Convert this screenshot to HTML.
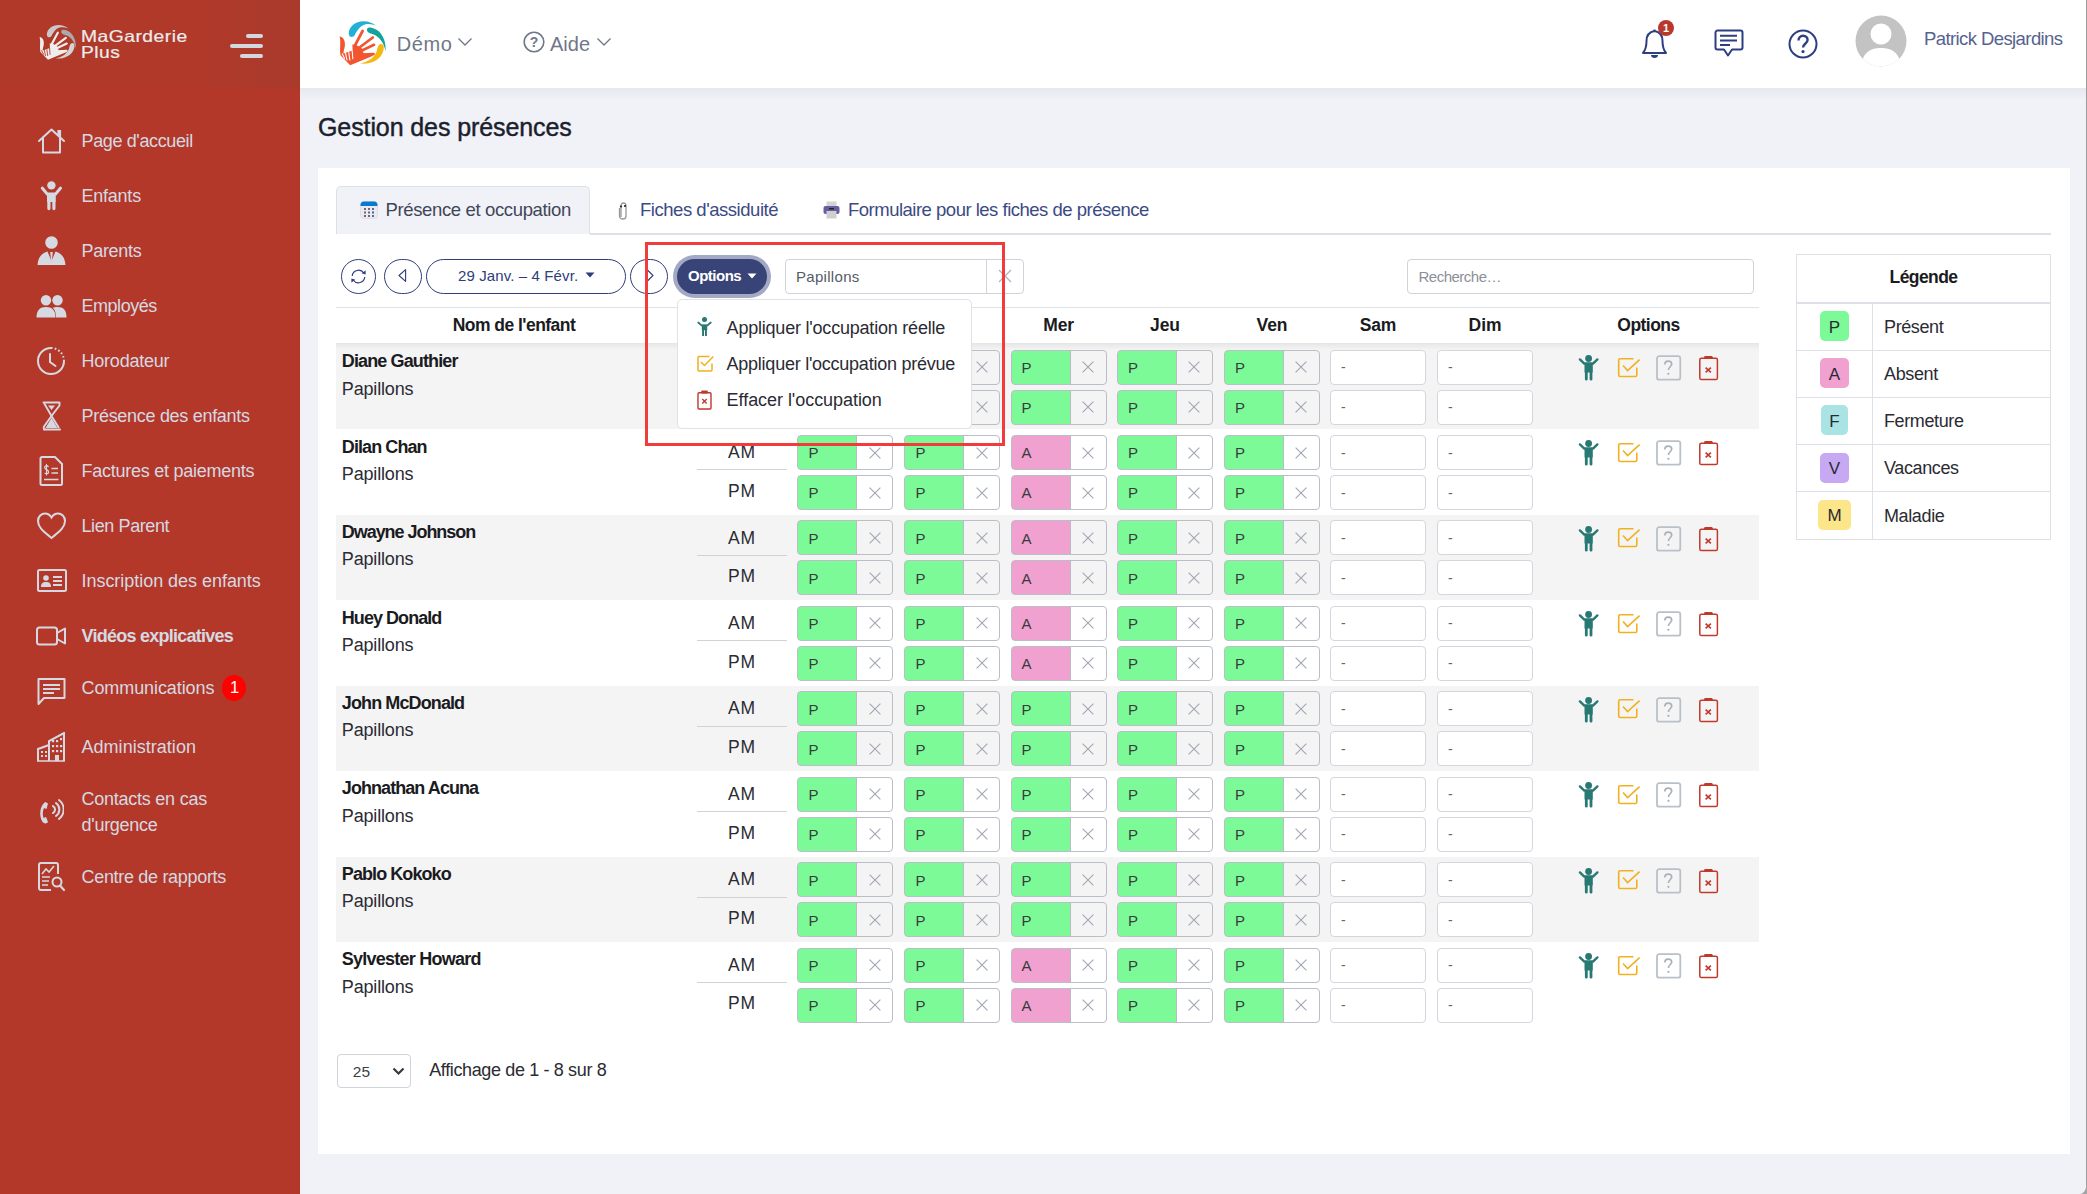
<!DOCTYPE html><html><head><meta charset="utf-8"><style>
html,body{margin:0;padding:0}
body{width:2087px;height:1194px;overflow:hidden;position:relative;background:#f1f2f7;font-family:"Liberation Sans",sans-serif}
.t{position:absolute;white-space:nowrap}
.r{position:absolute;box-sizing:border-box}
</style></head><body>
<div class="r" style="left:0px;top:0px;width:300px;height:1194px;background:#b3382a"></div>
<div class="r" style="left:0px;top:0px;width:300px;height:88px;background:linear-gradient(90deg,#b1392a 0,#b0392a 200px,#a93a2c 300px)"></div>
<svg class="r" style="left:35.6px;top:19.8px" width="43" height="43" viewBox="0 0 43 43"><g transform="scale(0.79)">
<path d="M41 10.8 C36 6 28 5 22 7.5 C16 10 13.5 15 13.8 19 C14 22 17.5 23 19.5 20.5 C22 16 24.5 11 30 9.5 C34 8.5 38 9.5 41 10.8 Z" fill="#c9c9c9"/>
<path d="M34 12.4 C43 12.5 51.5 21 50.6 36.4 C49 28 44.5 21.5 38 19.3 C34.5 18.3 31.8 17 32 14.8 C32.2 13.2 33 12.4 34 12.4 Z" fill="#a9abab"/>
<path d="M48.8 32 C49 42 38.5 50.5 24.9 48.3 C33.5 47 39.5 42.5 41.8 36 C42.5 33 43.2 29.3 45.7 29 C47.6 28.8 48.8 30.2 48.8 32 Z" fill="#d3d3d3"/>
<path d="M4.6 21.6 C8.5 22 10.2 26 9.9 30.5 C9.6 34 8.2 36.5 8.6 38.5 L17.6 35.5 L17.4 29.6 L20.5 29.5 L27 33.5 L28.5 38.2 L38.8 40.4 L15.2 50.2 L5.6 40.5 C4.2 34 6.2 28 4.6 21.6 Z" fill="#eeeeee"/>
<g stroke="#eeeeee" stroke-width="2.7" stroke-linecap="round"><path d="M20.2 30 L27.6 16"/><path d="M24.5 32.5 L37.8 22.5"/><path d="M27 35.5 L39 29.8"/><path d="M27.5 39.5 L38.5 39"/></g>
<g stroke="#b1392a" stroke-width="1.1" stroke-linecap="round"><path d="M7.2 38.8 L9.6 43.6"/><path d="M10.6 38.3 L12 45"/><path d="M13.8 37.6 L14.8 45"/><path d="M17.2 35.8 L17.8 43.6"/></g>
</g></svg>
<div class="t" style="left:81px;top:27.98px;font-size:16.5px;line-height:16.5px;color:#ececec;letter-spacing:0.4px;transform:scaleX(1.17);transform-origin:0 0;-webkit-text-stroke:0.2px #ececec;">MaGarderie</div>
<div class="t" style="left:81px;top:44.27px;font-size:16.5px;line-height:16.5px;color:#ececec;letter-spacing:0.4px;transform:scaleX(1.17);transform-origin:0 0;-webkit-text-stroke:0.2px #ececec;">Plus</div>
<div class="r" style="left:246px;top:34px;width:17px;height:3.6000000000000014px;background:#d3d8df;border-radius:2px"></div>
<div class="r" style="left:230px;top:44.2px;width:33px;height:3.5999999999999943px;background:#d3d8df;border-radius:2px"></div>
<div class="r" style="left:240px;top:54.3px;width:23px;height:3.6000000000000014px;background:#d3d8df;border-radius:2px"></div>
<div class="t" style="left:81.5px;top:131.50px;font-size:18px;line-height:18px;color:#d5d9e1;letter-spacing:-0.369px;">Page d'accueil</div>
<div class="t" style="left:81.5px;top:186.50px;font-size:18px;line-height:18px;color:#d5d9e1;letter-spacing:-0.233px;">Enfants</div>
<div class="t" style="left:81.5px;top:241.50px;font-size:18px;line-height:18px;color:#d5d9e1;letter-spacing:-0.317px;">Parents</div>
<div class="t" style="left:81.5px;top:296.50px;font-size:18px;line-height:18px;color:#d5d9e1;letter-spacing:-0.471px;">Employés</div>
<div class="t" style="left:81.5px;top:351.50px;font-size:18px;line-height:18px;color:#d5d9e1;letter-spacing:-0.222px;">Horodateur</div>
<div class="t" style="left:81.5px;top:406.50px;font-size:18px;line-height:18px;color:#d5d9e1;letter-spacing:-0.295px;">Présence des enfants</div>
<div class="t" style="left:81.5px;top:461.50px;font-size:18px;line-height:18px;color:#d5d9e1;letter-spacing:-0.26px;">Factures et paiements</div>
<div class="t" style="left:81.5px;top:516.50px;font-size:18px;line-height:18px;color:#d5d9e1;letter-spacing:-0.4px;">Lien Parent</div>
<div class="t" style="left:81.5px;top:571.50px;font-size:18px;line-height:18px;color:#d5d9e1;letter-spacing:-0.036px;">Inscription des enfants</div>
<div class="t" style="left:81.5px;top:626.50px;font-size:18px;line-height:18px;color:#d5d9e1;font-weight:700;letter-spacing:-0.75px;">Vidéos explicatives</div>
<div class="t" style="left:81.5px;top:679.20px;font-size:18px;line-height:18px;color:#d5d9e1;letter-spacing:-0.085px;">Communications</div>
<div class="t" style="left:81.5px;top:738.10px;font-size:18px;line-height:18px;color:#d5d9e1;letter-spacing:0.03px;">Administration</div>
<div class="t" style="left:81.5px;top:789.70px;font-size:18px;line-height:18px;color:#d5d9e1;letter-spacing:-0.243px;">Contacts en cas</div>
<div class="t" style="left:81.5px;top:815.50px;font-size:18px;line-height:18px;color:#d5d9e1;letter-spacing:-0.275px;">d'urgence</div>
<div class="t" style="left:81.5px;top:868.20px;font-size:18px;line-height:18px;color:#d5d9e1;letter-spacing:-0.312px;">Centre de rapports</div>
<div class="r" style="left:222.3px;top:675px;width:24.19999999999999px;height:26px;background:#ff0000;border-radius:50%"></div>
<div class="t" style="left:-65.4px;width:600px;text-align:center;top:679.18px;font-size:16.5px;line-height:16.5px;color:#fff;">1</div>
<svg class="r" style="left:37px;top:128px" width="29" height="26" viewBox="0 0 29 26"><path d="M2 13 L14.5 1.5 L27 13" fill="none" stroke="#d5d9e1" stroke-width="2" stroke-linecap="round" stroke-linejoin="round"/><path d="M6 10 V24.5 H23 V10" fill="none" stroke="#d5d9e1" stroke-width="2" stroke-linejoin="round"/><path d="M21 7 V2.5 H23.5 V9" fill="#d5d9e1" stroke="#d5d9e1" stroke-width="1.2"/></svg>
<svg class="r" style="left:40px;top:181px" width="23" height="30" viewBox="0 0 23 30"><circle cx="11.4" cy="4.4" r="4.2" fill="#d5d9e1"/><path d="M2.2 7 L7.2 13 H15.6 L20.6 7" fill="none" stroke="#d5d9e1" stroke-width="2.9" stroke-linecap="round" stroke-linejoin="round"/><path d="M7 12 H15.8 V21 H15.5 V27.6 A1.6 1.6 0 0 1 12.3 27.6 V21 H10.5 V27.6 A1.6 1.6 0 0 1 7.3 27.6 V21 H7 Z" fill="#d5d9e1"/></svg>
<svg class="r" style="left:37px;top:236px" width="29" height="29" viewBox="0 0 29 29"><circle cx="14.5" cy="6.5" r="6.3" fill="#d5d9e1"/><path d="M0.5 29 C1 21 5 17 10.5 15.5 L14.5 25 L18.5 15.5 C24 17 28 21 28.5 29 Z" fill="#d5d9e1"/><path d="M13.2 16 H15.8 L15 24 L14.5 25 L14 24 Z" fill="#d5d9e1"/></svg>
<svg class="r" style="left:36px;top:295px" width="31" height="23" viewBox="0 0 31 23"><circle cx="10" cy="5.2" r="5.2" fill="#d5d9e1"/><circle cx="21.5" cy="5.2" r="5.2" fill="#d5d9e1"/><path d="M0.5 22.5 C0.5 15 4 12 10 12 C16 12 19.5 15 19.5 22.5 Z" fill="#d5d9e1"/><path d="M20 22.5 C20 17 18.5 14 16.5 12.7 C18 12.2 19.5 12 21.5 12 C27.5 12 30.5 15 30.5 22.5 Z" fill="#d5d9e1"/></svg>
<svg class="r" style="left:36px;top:346px" width="31" height="30" viewBox="0 0 31 30"><path d="M15 2 A13 13 0 1 0 28 15" fill="none" stroke="#d5d9e1" stroke-width="2"/><path d="M15 2 A13 13 0 0 1 28 15" fill="none" stroke="#d5d9e1" stroke-width="2" stroke-dasharray="1.6 2.2"/><path d="M14 8 V16 L19.5 20" fill="none" stroke="#d5d9e1" stroke-width="2" stroke-linecap="round"/></svg>
<svg class="r" style="left:41px;top:401px" width="21" height="30" viewBox="0 0 21 30"><path d="M2.5 1.5 H18.5 M3 28.5 H19" stroke="#d5d9e1" stroke-width="2" stroke-linecap="round"/><path d="M18.5 2 V4.5 L10.5 15 L18 27" fill="none" stroke="#d5d9e1" stroke-width="1.9" stroke-linejoin="round"/><path d="M3 2 L10.5 15 L3 25.5 C2.3 27 2.8 28 4 28.5" fill="none" stroke="#d5d9e1" stroke-width="1.9" stroke-linejoin="round"/><path d="M7 4.5 H14 L10.5 9 Z" fill="#d5d9e1"/><path d="M10.5 17 L16.5 27 H4.5 Z" fill="#d5d9e1"/></svg>
<svg class="r" style="left:39px;top:456px" width="25" height="30" viewBox="0 0 25 30"><path d="M3 1 H16 L23 8 V27.5 A1.5 1.5 0 0 1 21.5 29 H3 A1.5 1.5 0 0 1 1.5 27.5 V2.5 A1.5 1.5 0 0 1 3 1 Z" fill="none" stroke="#d5d9e1" stroke-width="2"/><path d="M12.5 12.5 H19 M12.5 17 H19 M5 23.5 H19.5" stroke="#d5d9e1" stroke-width="1.6"/><path d="M9.5 11 C9 10 8 9.6 7 9.8 C5.5 10.1 5.2 12 6.5 13 C7.5 13.8 9.5 14.2 9.6 16 C9.7 17.5 7.5 18.2 5.6 17" fill="none" stroke="#d5d9e1" stroke-width="1.3"/><path d="M7.5 8 V19.5" stroke="#d5d9e1" stroke-width="1.1"/></svg>
<svg class="r" style="left:36px;top:512px" width="31" height="28" viewBox="0 0 31 28"><path d="M15.5 26 C9 20.5 2 16 2 9 C2 4.5 5.5 1.5 9 1.5 C12 1.5 14 3 15.5 5.5 C17 3 19 1.5 22 1.5 C25.5 1.5 29 4.5 29 9 C29 16 22 20.5 15.5 26 Z" fill="none" stroke="#d5d9e1" stroke-width="2"/></svg>
<svg class="r" style="left:37px;top:569px" width="30" height="23" viewBox="0 0 30 23"><rect x="1" y="1" width="28" height="21" rx="1.5" fill="none" stroke="#d5d9e1" stroke-width="2"/><circle cx="9" cy="9" r="2.8" fill="#d5d9e1"/><path d="M4 18 C4 14 6 13 9 13 C12 13 14 14 14 18 Z" fill="#d5d9e1"/><path d="M16 8 H25 M16 12 H25 M16 16 H25" stroke="#d5d9e1" stroke-width="1.8"/></svg>
<svg class="r" style="left:36px;top:626px" width="31" height="20" viewBox="0 0 31 20"><rect x="1" y="1.5" width="20" height="17" rx="2.5" fill="none" stroke="#d5d9e1" stroke-width="2"/><path d="M21 7 L29 2.5 V17.5 L21 13" fill="none" stroke="#d5d9e1" stroke-width="2" stroke-linejoin="round"/></svg>
<svg class="r" style="left:36px;top:677px" width="31" height="30" viewBox="0 0 31 30"><path d="M2.5 2 H28.5 V21 H8 L2.5 27 Z" fill="none" stroke="#d5d9e1" stroke-width="2" stroke-linejoin="round"/><path d="M7 8 H24 M7 12 H24 M7 16 H18" stroke="#d5d9e1" stroke-width="1.8"/></svg>
<svg class="r" style="left:36px;top:732px" width="30" height="30" viewBox="0 0 30 30"><path d="M1 29 H29" stroke="#d5d9e1" stroke-width="1.5"/><path d="M13 29 V9 L28 1 V29" fill="none" stroke="#d5d9e1" stroke-width="2"/><path d="M2 29 V17 L13 13" fill="none" stroke="#d5d9e1" stroke-width="2"/><g fill="#d5d9e1"><rect x="16" y="8" width="2.2" height="2.2"/><rect x="20" y="8" width="2.2" height="2.2"/><rect x="24" y="6" width="2.2" height="2.2"/><rect x="16" y="13" width="2.2" height="2.2"/><rect x="20" y="13" width="2.2" height="2.2"/><rect x="24" y="13" width="2.2" height="2.2"/><rect x="16" y="18" width="2.2" height="2.2"/><rect x="20" y="18" width="2.2" height="2.2"/><rect x="24" y="18" width="2.2" height="2.2"/><rect x="5" y="19" width="2" height="2"/><rect x="9" y="19" width="2" height="2"/><rect x="5" y="23" width="2" height="2"/><rect x="9" y="23" width="2" height="2"/><rect x="19" y="23" width="4" height="6"/></g></svg>
<svg class="r" style="left:38px;top:797px" width="26" height="30" viewBox="0 0 26 30"><path d="M6 6 C2 10 1 18 4 24 C5 26 7 27 9 26 L10 25 L8 20 L5.5 21 C4.5 18 4.5 14 6 11 L8.5 12 L10 6.5 L7.5 5 Z" fill="#d5d9e1"/><path d="M13 10 A4 4 0 0 1 13 17 M16 7 A8 8 0 0 1 16 20 M19 4 A12 12 0 0 1 19 23" fill="none" stroke="#d5d9e1" stroke-width="2" stroke-linecap="round" transform="translate(2,-1)"/></svg>
<svg class="r" style="left:38px;top:862px" width="27" height="30" viewBox="0 0 27 30"><path d="M20 12 V3 A2 2 0 0 0 18 1 H3 A2 2 0 0 0 1 3 V26 A2 2 0 0 0 3 28 H13" fill="none" stroke="#d5d9e1" stroke-width="2"/><path d="M4 12 L8 7 L11 10 L16 4" fill="none" stroke="#d5d9e1" stroke-width="1.6"/><path d="M4 15 H12 M4 19 H11 M4 23 H10" stroke="#d5d9e1" stroke-width="1.6"/><circle cx="19" cy="20" r="4.5" fill="none" stroke="#d5d9e1" stroke-width="2"/><path d="M22 23.5 L26 28" stroke="#d5d9e1" stroke-width="2.2" stroke-linecap="round"/></svg>
<div class="r" style="left:300px;top:0px;width:1787px;height:88px;background:#fff"></div>
<div class="r" style="left:300px;top:88px;width:1787px;height:12px;background:linear-gradient(#e6e8ee,#f1f2f7)"></div>
<svg class="r" style="left:335px;top:15px" width="54" height="54" viewBox="0 0 54 54"><g transform="scale(1.0)">
<path d="M41 10.8 C36 6 28 5 22 7.5 C16 10 13.5 15 13.8 19 C14 22 17.5 23 19.5 20.5 C22 16 24.5 11 30 9.5 C34 8.5 38 9.5 41 10.8 Z" fill="#22b1d6"/>
<path d="M34 12.4 C43 12.5 51.5 21 50.6 36.4 C49 28 44.5 21.5 38 19.3 C34.5 18.3 31.8 17 32 14.8 C32.2 13.2 33 12.4 34 12.4 Z" fill="#12a39c"/>
<path d="M48.8 32 C49 42 38.5 50.5 24.9 48.3 C33.5 47 39.5 42.5 41.8 36 C42.5 33 43.2 29.3 45.7 29 C47.6 28.8 48.8 30.2 48.8 32 Z" fill="#f4b813"/>
<path d="M4.6 21.6 C8.5 22 10.2 26 9.9 30.5 C9.6 34 8.2 36.5 8.6 38.5 L17.6 35.5 L17.4 29.6 L20.5 29.5 L27 33.5 L28.5 38.2 L38.8 40.4 L15.2 50.2 L5.6 40.5 C4.2 34 6.2 28 4.6 21.6 Z" fill="#f35530"/>
<g stroke="#f35530" stroke-width="2.7" stroke-linecap="round"><path d="M20.2 30 L27.6 16"/><path d="M24.5 32.5 L37.8 22.5"/><path d="M27 35.5 L39 29.8"/><path d="M27.5 39.5 L38.5 39"/></g>
<g stroke="#ffffff" stroke-width="1.1" stroke-linecap="round"><path d="M7.2 38.8 L9.6 43.6"/><path d="M10.6 38.3 L12 45"/><path d="M13.8 37.6 L14.8 45"/><path d="M17.2 35.8 L17.8 43.6"/></g>
</g></svg>
<div class="t" style="left:396.8px;top:33.80px;font-size:20px;line-height:20px;color:#707788;letter-spacing:0.6px;">Démo</div>
<svg class="r" style="left:457px;top:37px" width="16" height="10" viewBox="0 0 16 10"><path d="M1.5 1.5 L8 8 L14.5 1.5" fill="none" stroke="#707788" stroke-width="1.3"/></svg>
<svg class="r" style="left:523px;top:31px" width="22" height="22" viewBox="0 0 22 22"><circle cx="11" cy="11" r="9.8" fill="none" stroke="#707788" stroke-width="1.6"/><text x="11" y="16" text-anchor="middle" font-size="14" font-weight="700" font-family="Liberation Sans" fill="#707788">?</text></svg>
<div class="t" style="left:550px;top:33.80px;font-size:20px;line-height:20px;color:#707788;">Aide</div>
<svg class="r" style="left:596px;top:37px" width="16" height="10" viewBox="0 0 16 10"><path d="M1.5 1.5 L8 8 L14.5 1.5" fill="none" stroke="#707788" stroke-width="1.3"/></svg>
<svg class="r" style="left:1641px;top:29px" width="27" height="30" viewBox="0 0 27 30"><path d="M13.5 2 C8 3 5.5 7 5.5 12 C5.5 17 4.5 21 2 24 H25 C22.5 21 21.5 17 21.5 12 C21.5 7 19 3 13.5 2 Z" fill="none" stroke="#2d3f80" stroke-width="2" stroke-linejoin="round"/><path d="M13.5 0.5 V2.5" stroke="#2d3f80" stroke-width="2"/><path d="M10 26 H17 C17 28 15.5 29 13.5 29 C11.5 29 10 28 10 26 Z" fill="#2d3f80"/></svg>
<div class="r" style="left:1658px;top:19.5px;width:16px;height:16.0px;background:#b8392b;border-radius:50%"></div>
<div class="t" style="left:1366px;width:600px;text-align:center;top:22.65px;font-size:11px;line-height:11px;color:#fff;font-weight:700;">1</div>
<svg class="r" style="left:1714px;top:29px" width="30" height="29" viewBox="0 0 30 29"><path d="M3.5 1.5 H26.5 A2 2 0 0 1 28.5 3.5 V18.5 A2 2 0 0 1 26.5 20.5 H18 L14 26.5 L10 20.5 H3.5 A2 2 0 0 1 1.5 18.5 V3.5 A2 2 0 0 1 3.5 1.5 Z" fill="none" stroke="#2d3f80" stroke-width="2" stroke-linejoin="round"/><path d="M6 6.8 H23 M6 11.5 H23 M6 16 H16" stroke="#2d3f80" stroke-width="2"/></svg>
<svg class="r" style="left:1788px;top:29px" width="30" height="30" viewBox="0 0 30 30"><circle cx="15" cy="15" r="13.5" fill="none" stroke="#2d3f80" stroke-width="2"/><path d="M10.5 11.5 C10.5 8.5 12.5 6.8 15 6.8 C17.8 6.8 19.6 8.6 19.6 11 C19.6 14.5 15 15 15 18.5" fill="none" stroke="#2d3f80" stroke-width="2.4"/><circle cx="15" cy="22.6" r="1.6" fill="#2d3f80"/></svg>
<svg class="r" style="left:1855px;top:15px" width="52" height="52" viewBox="0 0 52 52"><defs><clipPath id="cav"><circle cx="26" cy="26" r="25.5"/></clipPath></defs><circle cx="26" cy="26" r="25.5" fill="#c3c3c3"/><g clip-path="url(#cav)"><circle cx="26" cy="19" r="10.5" fill="#fff"/><path d="M6 52 C7 38 15 33 26 33 C37 33 45 38 46 52 Z" fill="#fff"/></g></svg>
<div class="t" style="left:1924px;top:30.27px;font-size:18.5px;line-height:18.5px;color:#55638f;letter-spacing:-0.59px;">Patrick Desjardins</div>
<div class="t" style="left:318px;top:114.75px;font-size:25px;line-height:25px;color:#1c1f2e;letter-spacing:-0.1px;-webkit-text-stroke:0.45px #1c1f2e;">Gestion des présences</div>
<div class="r" style="left:318px;top:168px;width:1752px;height:986px;background:#fff"></div>
<div class="r" style="left:2085.6px;top:0px;width:1.400000000000091px;height:1194px;background:#9c9c9c"></div>
<svg class="r" style="left:2070px;top:1174px" width="17" height="20" viewBox="0 0 17 20"><path d="M16.3 11 A7 9 0 0 1 10.5 20 H17 V11 Z" fill="#a4a4a4"/></svg>
<div class="r" style="left:336px;top:186px;width:254px;height:48px;background:#f1f2f7;border:1px solid #dde1e7;border-bottom:none;border-radius:5px 5px 0 0"></div>
<div class="r" style="left:590px;top:233px;width:1461px;height:1.5px;background:#dde1e7"></div>
<svg class="r" style="left:360px;top:201px" width="18" height="18" viewBox="0 0 18 18"><rect x="0.5" y="0.5" width="17" height="17" rx="3.5" fill="#ece9f1" stroke="#d8d4de" stroke-width="0.6"/><path d="M0.5 4 A3.5 3.5 0 0 1 4 0.5 H14 A3.5 3.5 0 0 1 17.5 4 V5 H0.5 Z" fill="#0a7ad0"/><g fill="#6e6877"><rect x="4" y="7" width="2" height="2"/><rect x="8" y="7" width="2" height="2"/><rect x="12" y="7" width="2" height="2"/><rect x="4" y="10.5" width="2" height="2"/><rect x="8" y="10.5" width="2" height="2"/><rect x="4" y="14" width="2" height="2"/><rect x="8" y="14" width="2" height="2"/><rect x="12" y="14" width="2" height="2"/></g><rect x="12" y="10.5" width="2" height="2" fill="#0a7ad0"/></svg>
<div class="t" style="left:385.5px;top:200.78px;font-size:18.5px;line-height:18.5px;color:#404659;letter-spacing:-0.36px;">Présence et occupation</div>
<svg class="r" style="left:617px;top:201px" width="12" height="19" viewBox="0 0 12 19"><path d="M4 16 V5 C4 3 5 2 6.5 2 C8 2 9 3 9 5 V15 C9 17 8 18 6 18 C4 18 2.5 17 2.5 15 V7" fill="none" stroke="#999" stroke-width="1.3"/><circle cx="4" cy="5.5" r="1.1" fill="#222"/><circle cx="8" cy="5" r="1.1" fill="#222"/></svg>
<div class="t" style="left:640px;top:200.78px;font-size:18.5px;line-height:18.5px;color:#3b4a85;letter-spacing:-0.47px;">Fiches d&#39;assiduité</div>
<svg class="r" style="left:823px;top:201px" width="17" height="18" viewBox="0 0 17 18"><rect x="3.5" y="0.5" width="10" height="5" fill="#d4d4d4"/><rect x="0.5" y="5" width="16" height="8" rx="2" fill="#6a5c9e"/><rect x="3.5" y="10" width="10" height="7.5" fill="#cfcfcf"/><rect x="6" y="7" width="5" height="1.4" fill="#222"/></svg>
<div class="t" style="left:848px;top:200.78px;font-size:18.5px;line-height:18.5px;color:#3b4a85;letter-spacing:-0.5px;">Formulaire pour les fiches de présence</div>
<div class="r" style="left:341px;top:259px;width:35px;height:35px;border:1.3px solid #2f3d78;border-radius:50%"></div>
<svg class="r" style="left:349px;top:267px" width="19" height="19" viewBox="0 0 19 19"><path d="M3.2 9 A6.4 6.4 0 0 1 14.8 6" fill="none" stroke="#2f3d78" stroke-width="1.2"/><path d="M15.8 10 A6.4 6.4 0 0 1 4.2 13" fill="none" stroke="#2f3d78" stroke-width="1.2"/><path d="M12.6 6.2 L16.6 7.6 L16.6 3.4 Z" fill="#2f3d78"/><path d="M6.4 12.8 L2.4 11.4 L2.4 15.6 Z" fill="#2f3d78"/></svg>
<div class="r" style="left:384px;top:259px;width:38px;height:35px;border:1.3px solid #2f3d78;border-radius:18px"></div>
<svg class="r" style="left:397px;top:268px" width="10" height="16" viewBox="0 0 10 16"><path d="M8.6 1.6 L2 7.5 L8.6 13.4 Z" fill="none" stroke="#2f3d78" stroke-width="1.1" stroke-linejoin="round"/></svg>
<div class="r" style="left:426px;top:259px;width:200px;height:35px;border:1.3px solid #2f3d78;border-radius:18px"></div>
<div class="t" style="left:458px;top:268.45px;font-size:15px;line-height:15px;color:#2f3d78;letter-spacing:0.12px;">29 Janv. – 4 Févr.</div>
<svg class="r" style="left:585px;top:272px" width="10" height="6" viewBox="0 0 10 6"><path d="M0.5 0.5 H9.5 L5 5.5 Z" fill="#2f3d78"/></svg>
<div class="r" style="left:630px;top:259px;width:38px;height:35px;border:1.3px solid #2f3d78;border-radius:18px"></div>
<svg class="r" style="left:644px;top:268px" width="10" height="16" viewBox="0 0 10 16"><path d="M3.5 2 L9 7.5 L3.5 13" fill="none" stroke="#2f3d78" stroke-width="1.1"/></svg>
<div class="r" style="left:673px;top:255px;width:98px;height:43px;background:#a2a9c4;border-radius:22px"></div>
<div class="r" style="left:677px;top:259px;width:90px;height:35px;background:#384478;border-radius:18px"></div>
<div class="t" style="left:688px;top:267.85px;font-size:15px;line-height:15px;color:#fff;font-weight:700;letter-spacing:-0.5px;">Options</div>
<svg class="r" style="left:747px;top:272.5px" width="10" height="6" viewBox="0 0 10 6"><path d="M0.5 0.5 H9.5 L5 5.5 Z" fill="#fff"/></svg>
<div class="r" style="left:785px;top:259px;width:239px;height:35px;border:1px solid #cfd4db;border-radius:4px;background:#fff"></div>
<div class="r" style="left:986px;top:259px;width:1px;height:35px;background:#cfd4db"></div>
<div class="t" style="left:796px;top:268.95px;font-size:15px;line-height:15px;color:#555b66;letter-spacing:0.3px;">Papillons</div>
<svg class="r" style="left:997px;top:268px" width="16" height="16" viewBox="0 0 16 16"><path d="M2 2 L14 14 M14 2 L2 14" stroke="#b0b4bb" stroke-width="1.3"/></svg>
<div class="r" style="left:1407px;top:259px;width:347px;height:35px;border:1px solid #cfd4db;border-radius:4px;background:#fff"></div>
<div class="t" style="left:1418.5px;top:269.25px;font-size:15px;line-height:15px;color:#8b9099;letter-spacing:-0.5px;">Recherche…</div>
<div class="r" style="left:336px;top:307px;width:1423px;height:1.1999999999999886px;background:#dfe3e9"></div>
<div class="t" style="left:214px;width:600px;text-align:center;top:316.93px;font-size:17.5px;line-height:17.5px;color:#1b1b22;font-weight:700;letter-spacing:-0.54px;">Nom de l&#39;enfant</div>
<div class="t" style="left:545.4px;width:600px;text-align:center;top:316.93px;font-size:17.5px;line-height:17.5px;color:#1b1b22;font-weight:700;letter-spacing:-0.1px;">Lun</div>
<div class="t" style="left:652.4px;width:600px;text-align:center;top:316.93px;font-size:17.5px;line-height:17.5px;color:#1b1b22;font-weight:700;letter-spacing:-0.1px;">Mar</div>
<div class="t" style="left:758.5999999999999px;width:600px;text-align:center;top:316.93px;font-size:17.5px;line-height:17.5px;color:#1b1b22;font-weight:700;letter-spacing:-0.1px;">Mer</div>
<div class="t" style="left:865px;width:600px;text-align:center;top:316.93px;font-size:17.5px;line-height:17.5px;color:#1b1b22;font-weight:700;letter-spacing:-0.1px;">Jeu</div>
<div class="t" style="left:972px;width:600px;text-align:center;top:316.93px;font-size:17.5px;line-height:17.5px;color:#1b1b22;font-weight:700;letter-spacing:-0.1px;">Ven</div>
<div class="t" style="left:1078px;width:600px;text-align:center;top:316.93px;font-size:17.5px;line-height:17.5px;color:#1b1b22;font-weight:700;letter-spacing:-0.1px;">Sam</div>
<div class="t" style="left:1185px;width:600px;text-align:center;top:316.93px;font-size:17.5px;line-height:17.5px;color:#1b1b22;font-weight:700;letter-spacing:-0.1px;">Dim</div>
<div class="t" style="left:1348.5px;width:600px;text-align:center;top:316.93px;font-size:17.5px;line-height:17.5px;color:#1b1b22;font-weight:700;letter-spacing:-0.55px;">Options</div>
<div class="r" style="left:336px;top:342.5px;width:1423px;height:1.5px;background:#e6e6e6"></div>
<div class="r" style="left:336px;top:344px;width:1423px;height:6px;background:linear-gradient(rgba(0,0,0,0.06),rgba(0,0,0,0))"></div>
<div class="r" style="left:336px;top:344.0px;width:1423px;height:85.43px;background:#f4f4f4"></div>
<div class="r" style="left:336px;top:344.0px;width:1423px;height:6.0px;background:linear-gradient(rgba(0,0,0,0.05),rgba(0,0,0,0))"></div>
<div class="t" style="left:341.8px;top:352.30px;font-size:18px;line-height:18px;color:#1b1b22;font-weight:700;letter-spacing:-0.87px;">Diane Gauthier</div>
<div class="t" style="left:341.8px;top:379.50px;font-size:18px;line-height:18px;color:#2b2b33;letter-spacing:-0.16px;">Papillons</div>
<div class="t" style="left:442px;width:600px;text-align:center;top:358.73px;font-size:17.5px;line-height:17.5px;color:#2b2b33;letter-spacing:0.8px;">AM</div>
<div class="t" style="left:442px;width:600px;text-align:center;top:397.43px;font-size:17.5px;line-height:17.5px;color:#2b2b33;letter-spacing:0.8px;">PM</div>
<div class="r" style="left:697px;top:384.0px;width:90px;height:1.0px;background:#d2d2d2"></div>
<div class="r" style="left:797.4px;top:349.5px;width:96.0px;height:35.0px;border:1px solid #b9bec7;border-radius:4px;background:linear-gradient(90deg,#7cfa98 58.5px,transparent 58.5px)"></div>
<div class="r" style="left:856.4px;top:349.5px;width:1.0px;height:35.0px;background:#b9bcc4"></div>
<div class="t" style="left:808.4px;top:359.95px;font-size:15px;line-height:15px;color:#3a3a40;">P</div>
<svg class="r" style="left:868.6px;top:361.1px" width="12" height="12" viewBox="0 0 12 12"><path d="M0.6 0.6 L11.4 11.4 M11.4 0.6 L0.6 11.4" stroke="#9fa6b1" stroke-width="1.1"/></svg>
<div class="r" style="left:797.4px;top:389.6px;width:96.0px;height:35.0px;border:1px solid #b9bec7;border-radius:4px;background:linear-gradient(90deg,#7cfa98 58.5px,transparent 58.5px)"></div>
<div class="r" style="left:856.4px;top:389.6px;width:1.0px;height:35.0px;background:#b9bcc4"></div>
<div class="t" style="left:808.4px;top:400.05px;font-size:15px;line-height:15px;color:#3a3a40;">P</div>
<svg class="r" style="left:868.6px;top:401.20000000000005px" width="12" height="12" viewBox="0 0 12 12"><path d="M0.6 0.6 L11.4 11.4 M11.4 0.6 L0.6 11.4" stroke="#9fa6b1" stroke-width="1.1"/></svg>
<div class="r" style="left:904.4px;top:349.5px;width:96.0px;height:35.0px;border:1px solid #b9bec7;border-radius:4px;background:linear-gradient(90deg,#7cfa98 58.5px,transparent 58.5px)"></div>
<div class="r" style="left:963.4px;top:349.5px;width:1.0px;height:35.0px;background:#b9bcc4"></div>
<div class="t" style="left:915.4px;top:359.95px;font-size:15px;line-height:15px;color:#3a3a40;">P</div>
<svg class="r" style="left:975.6px;top:361.1px" width="12" height="12" viewBox="0 0 12 12"><path d="M0.6 0.6 L11.4 11.4 M11.4 0.6 L0.6 11.4" stroke="#9fa6b1" stroke-width="1.1"/></svg>
<div class="r" style="left:904.4px;top:389.6px;width:96.0px;height:35.0px;border:1px solid #b9bec7;border-radius:4px;background:linear-gradient(90deg,#7cfa98 58.5px,transparent 58.5px)"></div>
<div class="r" style="left:963.4px;top:389.6px;width:1.0px;height:35.0px;background:#b9bcc4"></div>
<div class="t" style="left:915.4px;top:400.05px;font-size:15px;line-height:15px;color:#3a3a40;">P</div>
<svg class="r" style="left:975.6px;top:401.20000000000005px" width="12" height="12" viewBox="0 0 12 12"><path d="M0.6 0.6 L11.4 11.4 M11.4 0.6 L0.6 11.4" stroke="#9fa6b1" stroke-width="1.1"/></svg>
<div class="r" style="left:1010.6px;top:349.5px;width:95.99999999999989px;height:35.0px;border:1px solid #b9bec7;border-radius:4px;background:linear-gradient(90deg,#7cfa98 58.5px,transparent 58.5px)"></div>
<div class="r" style="left:1069.6px;top:349.5px;width:1.0px;height:35.0px;background:#b9bcc4"></div>
<div class="t" style="left:1021.6px;top:359.95px;font-size:15px;line-height:15px;color:#3a3a40;">P</div>
<svg class="r" style="left:1081.8px;top:361.1px" width="12" height="12" viewBox="0 0 12 12"><path d="M0.6 0.6 L11.4 11.4 M11.4 0.6 L0.6 11.4" stroke="#9fa6b1" stroke-width="1.1"/></svg>
<div class="r" style="left:1010.6px;top:389.6px;width:95.99999999999989px;height:35.0px;border:1px solid #b9bec7;border-radius:4px;background:linear-gradient(90deg,#7cfa98 58.5px,transparent 58.5px)"></div>
<div class="r" style="left:1069.6px;top:389.6px;width:1.0px;height:35.0px;background:#b9bcc4"></div>
<div class="t" style="left:1021.6px;top:400.05px;font-size:15px;line-height:15px;color:#3a3a40;">P</div>
<svg class="r" style="left:1081.8px;top:401.20000000000005px" width="12" height="12" viewBox="0 0 12 12"><path d="M0.6 0.6 L11.4 11.4 M11.4 0.6 L0.6 11.4" stroke="#9fa6b1" stroke-width="1.1"/></svg>
<div class="r" style="left:1117px;top:349.5px;width:96px;height:35.0px;border:1px solid #b9bec7;border-radius:4px;background:linear-gradient(90deg,#7cfa98 58.5px,transparent 58.5px)"></div>
<div class="r" style="left:1176px;top:349.5px;width:1px;height:35.0px;background:#b9bcc4"></div>
<div class="t" style="left:1128px;top:359.95px;font-size:15px;line-height:15px;color:#3a3a40;">P</div>
<svg class="r" style="left:1188.2px;top:361.1px" width="12" height="12" viewBox="0 0 12 12"><path d="M0.6 0.6 L11.4 11.4 M11.4 0.6 L0.6 11.4" stroke="#9fa6b1" stroke-width="1.1"/></svg>
<div class="r" style="left:1117px;top:389.6px;width:96px;height:35.0px;border:1px solid #b9bec7;border-radius:4px;background:linear-gradient(90deg,#7cfa98 58.5px,transparent 58.5px)"></div>
<div class="r" style="left:1176px;top:389.6px;width:1px;height:35.0px;background:#b9bcc4"></div>
<div class="t" style="left:1128px;top:400.05px;font-size:15px;line-height:15px;color:#3a3a40;">P</div>
<svg class="r" style="left:1188.2px;top:401.20000000000005px" width="12" height="12" viewBox="0 0 12 12"><path d="M0.6 0.6 L11.4 11.4 M11.4 0.6 L0.6 11.4" stroke="#9fa6b1" stroke-width="1.1"/></svg>
<div class="r" style="left:1224px;top:349.5px;width:96px;height:35.0px;border:1px solid #b9bec7;border-radius:4px;background:linear-gradient(90deg,#7cfa98 58.5px,transparent 58.5px)"></div>
<div class="r" style="left:1283px;top:349.5px;width:1px;height:35.0px;background:#b9bcc4"></div>
<div class="t" style="left:1235px;top:359.95px;font-size:15px;line-height:15px;color:#3a3a40;">P</div>
<svg class="r" style="left:1295.2px;top:361.1px" width="12" height="12" viewBox="0 0 12 12"><path d="M0.6 0.6 L11.4 11.4 M11.4 0.6 L0.6 11.4" stroke="#9fa6b1" stroke-width="1.1"/></svg>
<div class="r" style="left:1224px;top:389.6px;width:96px;height:35.0px;border:1px solid #b9bec7;border-radius:4px;background:linear-gradient(90deg,#7cfa98 58.5px,transparent 58.5px)"></div>
<div class="r" style="left:1283px;top:389.6px;width:1px;height:35.0px;background:#b9bcc4"></div>
<div class="t" style="left:1235px;top:400.05px;font-size:15px;line-height:15px;color:#3a3a40;">P</div>
<svg class="r" style="left:1295.2px;top:401.20000000000005px" width="12" height="12" viewBox="0 0 12 12"><path d="M0.6 0.6 L11.4 11.4 M11.4 0.6 L0.6 11.4" stroke="#9fa6b1" stroke-width="1.1"/></svg>
<div class="r" style="left:1330px;top:349.5px;width:96px;height:35.0px;background:#fff;border:1px solid #d3d6dc;border-radius:4px"></div>
<div class="t" style="left:1341px;top:360.10px;font-size:14px;line-height:14px;color:#666;">-</div>
<div class="r" style="left:1330px;top:389.6px;width:96px;height:35.0px;background:#fff;border:1px solid #d3d6dc;border-radius:4px"></div>
<div class="t" style="left:1341px;top:400.20px;font-size:14px;line-height:14px;color:#666;">-</div>
<div class="r" style="left:1437px;top:349.5px;width:96px;height:35.0px;background:#fff;border:1px solid #d3d6dc;border-radius:4px"></div>
<div class="t" style="left:1448px;top:360.10px;font-size:14px;line-height:14px;color:#666;">-</div>
<div class="r" style="left:1437px;top:389.6px;width:96px;height:35.0px;background:#fff;border:1px solid #d3d6dc;border-radius:4px"></div>
<div class="t" style="left:1448px;top:400.20px;font-size:14px;line-height:14px;color:#666;">-</div>
<svg class="r" style="left:1578px;top:355.0px" width="22" height="27" viewBox="0 0 22 27"><circle cx="10.6" cy="3.5" r="3.4" fill="#287873"/><path d="M1.9 4.4 L6.3 8.6 H15 L19.4 4.4" fill="none" stroke="#287873" stroke-width="2.4" stroke-linecap="round" stroke-linejoin="round"/><path d="M6.5 7.6 H14.8 V17.5 H14.4 V24.2 A1.4 1.4 0 0 1 11.6 24.2 V17.5 H9.7 V24.2 A1.4 1.4 0 0 1 6.9 24.2 V17.5 H6.5 Z" fill="#287873"/></svg>
<svg class="r" style="left:1617px;top:356.5px" width="24" height="22" viewBox="0 0 24 22"><path d="M16.5 1.7 H3.2 A1.5 1.5 0 0 0 1.7 3.2 V18 A1.5 1.5 0 0 0 3.2 19.5 H18.3 A1.5 1.5 0 0 0 19.8 18 V10.5" fill="none" stroke="#f2b01e" stroke-width="1.6"/><path d="M6 8.5 L10.6 13.6 L22.6 2.6" fill="none" stroke="#f2b01e" stroke-width="1.6"/></svg>
<svg class="r" style="left:1655px;top:355.0px" width="27" height="26" viewBox="0 0 27 26"><rect x="2" y="1.1" width="23.3" height="23.6" rx="2.3" fill="none" stroke="#b9c0c9" stroke-width="1.8"/><path d="M9.8 9.6 C9.8 7.4 11.4 6.1 13.3 6.1 C15.3 6.1 16.7 7.4 16.7 9.1 C16.7 11.6 13.4 12 13.4 15" fill="none" stroke="#aab1bb" stroke-width="1.7"/><circle cx="13.4" cy="18.8" r="1.1" fill="#aab1bb"/></svg>
<svg class="r" style="left:1698px;top:355.0px" width="21" height="26" viewBox="0 0 21 26"><rect x="1.8" y="3.2" width="17.6" height="21.4" rx="1.6" fill="none" stroke="#c0392b" stroke-width="1.5"/><path d="M5.5 4 L6.6 0.9 H14.2 L15.3 4 Z" fill="#c0392b"/><path d="M7.6 12.6 L12.9 17.4 M12.9 12.6 L7.6 17.4" stroke="#c0392b" stroke-width="1.6"/></svg>
<div class="t" style="left:341.8px;top:437.73px;font-size:18px;line-height:18px;color:#1b1b22;font-weight:700;letter-spacing:-0.91px;">Dilan Chan</div>
<div class="t" style="left:341.8px;top:464.93px;font-size:18px;line-height:18px;color:#2b2b33;letter-spacing:-0.16px;">Papillons</div>
<div class="t" style="left:442px;width:600px;text-align:center;top:444.16px;font-size:17.5px;line-height:17.5px;color:#2b2b33;letter-spacing:0.8px;">AM</div>
<div class="t" style="left:442px;width:600px;text-align:center;top:482.86px;font-size:17.5px;line-height:17.5px;color:#2b2b33;letter-spacing:0.8px;">PM</div>
<div class="r" style="left:697px;top:469.43px;width:90px;height:1.0px;background:#d2d2d2"></div>
<div class="r" style="left:797.4px;top:434.93px;width:96.0px;height:35.0px;border:1px solid #b9bec7;border-radius:4px;background:linear-gradient(90deg,#7cfa98 58.5px,transparent 58.5px)"></div>
<div class="r" style="left:856.4px;top:434.93px;width:1.0px;height:35.0px;background:#b9bcc4"></div>
<div class="t" style="left:808.4px;top:445.38px;font-size:15px;line-height:15px;color:#3a3a40;">P</div>
<svg class="r" style="left:868.6px;top:446.53000000000003px" width="12" height="12" viewBox="0 0 12 12"><path d="M0.6 0.6 L11.4 11.4 M11.4 0.6 L0.6 11.4" stroke="#9fa6b1" stroke-width="1.1"/></svg>
<div class="r" style="left:797.4px;top:475.03000000000003px;width:96.0px;height:35.0px;border:1px solid #b9bec7;border-radius:4px;background:linear-gradient(90deg,#7cfa98 58.5px,transparent 58.5px)"></div>
<div class="r" style="left:856.4px;top:475.03000000000003px;width:1.0px;height:35.0px;background:#b9bcc4"></div>
<div class="t" style="left:808.4px;top:485.48px;font-size:15px;line-height:15px;color:#3a3a40;">P</div>
<svg class="r" style="left:868.6px;top:486.63000000000005px" width="12" height="12" viewBox="0 0 12 12"><path d="M0.6 0.6 L11.4 11.4 M11.4 0.6 L0.6 11.4" stroke="#9fa6b1" stroke-width="1.1"/></svg>
<div class="r" style="left:904.4px;top:434.93px;width:96.0px;height:35.0px;border:1px solid #b9bec7;border-radius:4px;background:linear-gradient(90deg,#7cfa98 58.5px,transparent 58.5px)"></div>
<div class="r" style="left:963.4px;top:434.93px;width:1.0px;height:35.0px;background:#b9bcc4"></div>
<div class="t" style="left:915.4px;top:445.38px;font-size:15px;line-height:15px;color:#3a3a40;">P</div>
<svg class="r" style="left:975.6px;top:446.53000000000003px" width="12" height="12" viewBox="0 0 12 12"><path d="M0.6 0.6 L11.4 11.4 M11.4 0.6 L0.6 11.4" stroke="#9fa6b1" stroke-width="1.1"/></svg>
<div class="r" style="left:904.4px;top:475.03000000000003px;width:96.0px;height:35.0px;border:1px solid #b9bec7;border-radius:4px;background:linear-gradient(90deg,#7cfa98 58.5px,transparent 58.5px)"></div>
<div class="r" style="left:963.4px;top:475.03000000000003px;width:1.0px;height:35.0px;background:#b9bcc4"></div>
<div class="t" style="left:915.4px;top:485.48px;font-size:15px;line-height:15px;color:#3a3a40;">P</div>
<svg class="r" style="left:975.6px;top:486.63000000000005px" width="12" height="12" viewBox="0 0 12 12"><path d="M0.6 0.6 L11.4 11.4 M11.4 0.6 L0.6 11.4" stroke="#9fa6b1" stroke-width="1.1"/></svg>
<div class="r" style="left:1010.6px;top:434.93px;width:95.99999999999989px;height:35.0px;border:1px solid #b9bec7;border-radius:4px;background:linear-gradient(90deg,#f0a1cf 58.5px,transparent 58.5px)"></div>
<div class="r" style="left:1069.6px;top:434.93px;width:1.0px;height:35.0px;background:#b9bcc4"></div>
<div class="t" style="left:1021.6px;top:445.38px;font-size:15px;line-height:15px;color:#3a3a40;">A</div>
<svg class="r" style="left:1081.8px;top:446.53000000000003px" width="12" height="12" viewBox="0 0 12 12"><path d="M0.6 0.6 L11.4 11.4 M11.4 0.6 L0.6 11.4" stroke="#9fa6b1" stroke-width="1.1"/></svg>
<div class="r" style="left:1010.6px;top:475.03000000000003px;width:95.99999999999989px;height:35.0px;border:1px solid #b9bec7;border-radius:4px;background:linear-gradient(90deg,#f0a1cf 58.5px,transparent 58.5px)"></div>
<div class="r" style="left:1069.6px;top:475.03000000000003px;width:1.0px;height:35.0px;background:#b9bcc4"></div>
<div class="t" style="left:1021.6px;top:485.48px;font-size:15px;line-height:15px;color:#3a3a40;">A</div>
<svg class="r" style="left:1081.8px;top:486.63000000000005px" width="12" height="12" viewBox="0 0 12 12"><path d="M0.6 0.6 L11.4 11.4 M11.4 0.6 L0.6 11.4" stroke="#9fa6b1" stroke-width="1.1"/></svg>
<div class="r" style="left:1117px;top:434.93px;width:96px;height:35.0px;border:1px solid #b9bec7;border-radius:4px;background:linear-gradient(90deg,#7cfa98 58.5px,transparent 58.5px)"></div>
<div class="r" style="left:1176px;top:434.93px;width:1px;height:35.0px;background:#b9bcc4"></div>
<div class="t" style="left:1128px;top:445.38px;font-size:15px;line-height:15px;color:#3a3a40;">P</div>
<svg class="r" style="left:1188.2px;top:446.53000000000003px" width="12" height="12" viewBox="0 0 12 12"><path d="M0.6 0.6 L11.4 11.4 M11.4 0.6 L0.6 11.4" stroke="#9fa6b1" stroke-width="1.1"/></svg>
<div class="r" style="left:1117px;top:475.03000000000003px;width:96px;height:35.0px;border:1px solid #b9bec7;border-radius:4px;background:linear-gradient(90deg,#7cfa98 58.5px,transparent 58.5px)"></div>
<div class="r" style="left:1176px;top:475.03000000000003px;width:1px;height:35.0px;background:#b9bcc4"></div>
<div class="t" style="left:1128px;top:485.48px;font-size:15px;line-height:15px;color:#3a3a40;">P</div>
<svg class="r" style="left:1188.2px;top:486.63000000000005px" width="12" height="12" viewBox="0 0 12 12"><path d="M0.6 0.6 L11.4 11.4 M11.4 0.6 L0.6 11.4" stroke="#9fa6b1" stroke-width="1.1"/></svg>
<div class="r" style="left:1224px;top:434.93px;width:96px;height:35.0px;border:1px solid #b9bec7;border-radius:4px;background:linear-gradient(90deg,#7cfa98 58.5px,transparent 58.5px)"></div>
<div class="r" style="left:1283px;top:434.93px;width:1px;height:35.0px;background:#b9bcc4"></div>
<div class="t" style="left:1235px;top:445.38px;font-size:15px;line-height:15px;color:#3a3a40;">P</div>
<svg class="r" style="left:1295.2px;top:446.53000000000003px" width="12" height="12" viewBox="0 0 12 12"><path d="M0.6 0.6 L11.4 11.4 M11.4 0.6 L0.6 11.4" stroke="#9fa6b1" stroke-width="1.1"/></svg>
<div class="r" style="left:1224px;top:475.03000000000003px;width:96px;height:35.0px;border:1px solid #b9bec7;border-radius:4px;background:linear-gradient(90deg,#7cfa98 58.5px,transparent 58.5px)"></div>
<div class="r" style="left:1283px;top:475.03000000000003px;width:1px;height:35.0px;background:#b9bcc4"></div>
<div class="t" style="left:1235px;top:485.48px;font-size:15px;line-height:15px;color:#3a3a40;">P</div>
<svg class="r" style="left:1295.2px;top:486.63000000000005px" width="12" height="12" viewBox="0 0 12 12"><path d="M0.6 0.6 L11.4 11.4 M11.4 0.6 L0.6 11.4" stroke="#9fa6b1" stroke-width="1.1"/></svg>
<div class="r" style="left:1330px;top:434.93px;width:96px;height:35.0px;background:#fff;border:1px solid #d3d6dc;border-radius:4px"></div>
<div class="t" style="left:1341px;top:445.53px;font-size:14px;line-height:14px;color:#666;">-</div>
<div class="r" style="left:1330px;top:475.03000000000003px;width:96px;height:35.0px;background:#fff;border:1px solid #d3d6dc;border-radius:4px"></div>
<div class="t" style="left:1341px;top:485.63px;font-size:14px;line-height:14px;color:#666;">-</div>
<div class="r" style="left:1437px;top:434.93px;width:96px;height:35.0px;background:#fff;border:1px solid #d3d6dc;border-radius:4px"></div>
<div class="t" style="left:1448px;top:445.53px;font-size:14px;line-height:14px;color:#666;">-</div>
<div class="r" style="left:1437px;top:475.03000000000003px;width:96px;height:35.0px;background:#fff;border:1px solid #d3d6dc;border-radius:4px"></div>
<div class="t" style="left:1448px;top:485.63px;font-size:14px;line-height:14px;color:#666;">-</div>
<svg class="r" style="left:1578px;top:440.43px" width="22" height="27" viewBox="0 0 22 27"><circle cx="10.6" cy="3.5" r="3.4" fill="#287873"/><path d="M1.9 4.4 L6.3 8.6 H15 L19.4 4.4" fill="none" stroke="#287873" stroke-width="2.4" stroke-linecap="round" stroke-linejoin="round"/><path d="M6.5 7.6 H14.8 V17.5 H14.4 V24.2 A1.4 1.4 0 0 1 11.6 24.2 V17.5 H9.7 V24.2 A1.4 1.4 0 0 1 6.9 24.2 V17.5 H6.5 Z" fill="#287873"/></svg>
<svg class="r" style="left:1617px;top:441.93px" width="24" height="22" viewBox="0 0 24 22"><path d="M16.5 1.7 H3.2 A1.5 1.5 0 0 0 1.7 3.2 V18 A1.5 1.5 0 0 0 3.2 19.5 H18.3 A1.5 1.5 0 0 0 19.8 18 V10.5" fill="none" stroke="#f2b01e" stroke-width="1.6"/><path d="M6 8.5 L10.6 13.6 L22.6 2.6" fill="none" stroke="#f2b01e" stroke-width="1.6"/></svg>
<svg class="r" style="left:1655px;top:440.43px" width="27" height="26" viewBox="0 0 27 26"><rect x="2" y="1.1" width="23.3" height="23.6" rx="2.3" fill="none" stroke="#b9c0c9" stroke-width="1.8"/><path d="M9.8 9.6 C9.8 7.4 11.4 6.1 13.3 6.1 C15.3 6.1 16.7 7.4 16.7 9.1 C16.7 11.6 13.4 12 13.4 15" fill="none" stroke="#aab1bb" stroke-width="1.7"/><circle cx="13.4" cy="18.8" r="1.1" fill="#aab1bb"/></svg>
<svg class="r" style="left:1698px;top:440.43px" width="21" height="26" viewBox="0 0 21 26"><rect x="1.8" y="3.2" width="17.6" height="21.4" rx="1.6" fill="none" stroke="#c0392b" stroke-width="1.5"/><path d="M5.5 4 L6.6 0.9 H14.2 L15.3 4 Z" fill="#c0392b"/><path d="M7.6 12.6 L12.9 17.4 M12.9 12.6 L7.6 17.4" stroke="#c0392b" stroke-width="1.6"/></svg>
<div class="r" style="left:336px;top:514.86px;width:1423px;height:85.42999999999995px;background:#f4f4f4"></div>
<div class="t" style="left:341.8px;top:523.16px;font-size:18px;line-height:18px;color:#1b1b22;font-weight:700;letter-spacing:-1.05px;">Dwayne Johnson</div>
<div class="t" style="left:341.8px;top:550.36px;font-size:18px;line-height:18px;color:#2b2b33;letter-spacing:-0.16px;">Papillons</div>
<div class="t" style="left:442px;width:600px;text-align:center;top:529.59px;font-size:17.5px;line-height:17.5px;color:#2b2b33;letter-spacing:0.8px;">AM</div>
<div class="t" style="left:442px;width:600px;text-align:center;top:568.28px;font-size:17.5px;line-height:17.5px;color:#2b2b33;letter-spacing:0.8px;">PM</div>
<div class="r" style="left:697px;top:554.86px;width:90px;height:1.0px;background:#d2d2d2"></div>
<div class="r" style="left:797.4px;top:520.36px;width:96.0px;height:35.0px;border:1px solid #b9bec7;border-radius:4px;background:linear-gradient(90deg,#7cfa98 58.5px,transparent 58.5px)"></div>
<div class="r" style="left:856.4px;top:520.36px;width:1.0px;height:35.0px;background:#b9bcc4"></div>
<div class="t" style="left:808.4px;top:530.81px;font-size:15px;line-height:15px;color:#3a3a40;">P</div>
<svg class="r" style="left:868.6px;top:531.96px" width="12" height="12" viewBox="0 0 12 12"><path d="M0.6 0.6 L11.4 11.4 M11.4 0.6 L0.6 11.4" stroke="#9fa6b1" stroke-width="1.1"/></svg>
<div class="r" style="left:797.4px;top:560.46px;width:96.0px;height:35.0px;border:1px solid #b9bec7;border-radius:4px;background:linear-gradient(90deg,#7cfa98 58.5px,transparent 58.5px)"></div>
<div class="r" style="left:856.4px;top:560.46px;width:1.0px;height:35.0px;background:#b9bcc4"></div>
<div class="t" style="left:808.4px;top:570.91px;font-size:15px;line-height:15px;color:#3a3a40;">P</div>
<svg class="r" style="left:868.6px;top:572.0600000000001px" width="12" height="12" viewBox="0 0 12 12"><path d="M0.6 0.6 L11.4 11.4 M11.4 0.6 L0.6 11.4" stroke="#9fa6b1" stroke-width="1.1"/></svg>
<div class="r" style="left:904.4px;top:520.36px;width:96.0px;height:35.0px;border:1px solid #b9bec7;border-radius:4px;background:linear-gradient(90deg,#7cfa98 58.5px,transparent 58.5px)"></div>
<div class="r" style="left:963.4px;top:520.36px;width:1.0px;height:35.0px;background:#b9bcc4"></div>
<div class="t" style="left:915.4px;top:530.81px;font-size:15px;line-height:15px;color:#3a3a40;">P</div>
<svg class="r" style="left:975.6px;top:531.96px" width="12" height="12" viewBox="0 0 12 12"><path d="M0.6 0.6 L11.4 11.4 M11.4 0.6 L0.6 11.4" stroke="#9fa6b1" stroke-width="1.1"/></svg>
<div class="r" style="left:904.4px;top:560.46px;width:96.0px;height:35.0px;border:1px solid #b9bec7;border-radius:4px;background:linear-gradient(90deg,#7cfa98 58.5px,transparent 58.5px)"></div>
<div class="r" style="left:963.4px;top:560.46px;width:1.0px;height:35.0px;background:#b9bcc4"></div>
<div class="t" style="left:915.4px;top:570.91px;font-size:15px;line-height:15px;color:#3a3a40;">P</div>
<svg class="r" style="left:975.6px;top:572.0600000000001px" width="12" height="12" viewBox="0 0 12 12"><path d="M0.6 0.6 L11.4 11.4 M11.4 0.6 L0.6 11.4" stroke="#9fa6b1" stroke-width="1.1"/></svg>
<div class="r" style="left:1010.6px;top:520.36px;width:95.99999999999989px;height:35.0px;border:1px solid #b9bec7;border-radius:4px;background:linear-gradient(90deg,#f0a1cf 58.5px,transparent 58.5px)"></div>
<div class="r" style="left:1069.6px;top:520.36px;width:1.0px;height:35.0px;background:#b9bcc4"></div>
<div class="t" style="left:1021.6px;top:530.81px;font-size:15px;line-height:15px;color:#3a3a40;">A</div>
<svg class="r" style="left:1081.8px;top:531.96px" width="12" height="12" viewBox="0 0 12 12"><path d="M0.6 0.6 L11.4 11.4 M11.4 0.6 L0.6 11.4" stroke="#9fa6b1" stroke-width="1.1"/></svg>
<div class="r" style="left:1010.6px;top:560.46px;width:95.99999999999989px;height:35.0px;border:1px solid #b9bec7;border-radius:4px;background:linear-gradient(90deg,#f0a1cf 58.5px,transparent 58.5px)"></div>
<div class="r" style="left:1069.6px;top:560.46px;width:1.0px;height:35.0px;background:#b9bcc4"></div>
<div class="t" style="left:1021.6px;top:570.91px;font-size:15px;line-height:15px;color:#3a3a40;">A</div>
<svg class="r" style="left:1081.8px;top:572.0600000000001px" width="12" height="12" viewBox="0 0 12 12"><path d="M0.6 0.6 L11.4 11.4 M11.4 0.6 L0.6 11.4" stroke="#9fa6b1" stroke-width="1.1"/></svg>
<div class="r" style="left:1117px;top:520.36px;width:96px;height:35.0px;border:1px solid #b9bec7;border-radius:4px;background:linear-gradient(90deg,#7cfa98 58.5px,transparent 58.5px)"></div>
<div class="r" style="left:1176px;top:520.36px;width:1px;height:35.0px;background:#b9bcc4"></div>
<div class="t" style="left:1128px;top:530.81px;font-size:15px;line-height:15px;color:#3a3a40;">P</div>
<svg class="r" style="left:1188.2px;top:531.96px" width="12" height="12" viewBox="0 0 12 12"><path d="M0.6 0.6 L11.4 11.4 M11.4 0.6 L0.6 11.4" stroke="#9fa6b1" stroke-width="1.1"/></svg>
<div class="r" style="left:1117px;top:560.46px;width:96px;height:35.0px;border:1px solid #b9bec7;border-radius:4px;background:linear-gradient(90deg,#7cfa98 58.5px,transparent 58.5px)"></div>
<div class="r" style="left:1176px;top:560.46px;width:1px;height:35.0px;background:#b9bcc4"></div>
<div class="t" style="left:1128px;top:570.91px;font-size:15px;line-height:15px;color:#3a3a40;">P</div>
<svg class="r" style="left:1188.2px;top:572.0600000000001px" width="12" height="12" viewBox="0 0 12 12"><path d="M0.6 0.6 L11.4 11.4 M11.4 0.6 L0.6 11.4" stroke="#9fa6b1" stroke-width="1.1"/></svg>
<div class="r" style="left:1224px;top:520.36px;width:96px;height:35.0px;border:1px solid #b9bec7;border-radius:4px;background:linear-gradient(90deg,#7cfa98 58.5px,transparent 58.5px)"></div>
<div class="r" style="left:1283px;top:520.36px;width:1px;height:35.0px;background:#b9bcc4"></div>
<div class="t" style="left:1235px;top:530.81px;font-size:15px;line-height:15px;color:#3a3a40;">P</div>
<svg class="r" style="left:1295.2px;top:531.96px" width="12" height="12" viewBox="0 0 12 12"><path d="M0.6 0.6 L11.4 11.4 M11.4 0.6 L0.6 11.4" stroke="#9fa6b1" stroke-width="1.1"/></svg>
<div class="r" style="left:1224px;top:560.46px;width:96px;height:35.0px;border:1px solid #b9bec7;border-radius:4px;background:linear-gradient(90deg,#7cfa98 58.5px,transparent 58.5px)"></div>
<div class="r" style="left:1283px;top:560.46px;width:1px;height:35.0px;background:#b9bcc4"></div>
<div class="t" style="left:1235px;top:570.91px;font-size:15px;line-height:15px;color:#3a3a40;">P</div>
<svg class="r" style="left:1295.2px;top:572.0600000000001px" width="12" height="12" viewBox="0 0 12 12"><path d="M0.6 0.6 L11.4 11.4 M11.4 0.6 L0.6 11.4" stroke="#9fa6b1" stroke-width="1.1"/></svg>
<div class="r" style="left:1330px;top:520.36px;width:96px;height:35.0px;background:#fff;border:1px solid #d3d6dc;border-radius:4px"></div>
<div class="t" style="left:1341px;top:530.96px;font-size:14px;line-height:14px;color:#666;">-</div>
<div class="r" style="left:1330px;top:560.46px;width:96px;height:35.0px;background:#fff;border:1px solid #d3d6dc;border-radius:4px"></div>
<div class="t" style="left:1341px;top:571.06px;font-size:14px;line-height:14px;color:#666;">-</div>
<div class="r" style="left:1437px;top:520.36px;width:96px;height:35.0px;background:#fff;border:1px solid #d3d6dc;border-radius:4px"></div>
<div class="t" style="left:1448px;top:530.96px;font-size:14px;line-height:14px;color:#666;">-</div>
<div class="r" style="left:1437px;top:560.46px;width:96px;height:35.0px;background:#fff;border:1px solid #d3d6dc;border-radius:4px"></div>
<div class="t" style="left:1448px;top:571.06px;font-size:14px;line-height:14px;color:#666;">-</div>
<svg class="r" style="left:1578px;top:525.86px" width="22" height="27" viewBox="0 0 22 27"><circle cx="10.6" cy="3.5" r="3.4" fill="#287873"/><path d="M1.9 4.4 L6.3 8.6 H15 L19.4 4.4" fill="none" stroke="#287873" stroke-width="2.4" stroke-linecap="round" stroke-linejoin="round"/><path d="M6.5 7.6 H14.8 V17.5 H14.4 V24.2 A1.4 1.4 0 0 1 11.6 24.2 V17.5 H9.7 V24.2 A1.4 1.4 0 0 1 6.9 24.2 V17.5 H6.5 Z" fill="#287873"/></svg>
<svg class="r" style="left:1617px;top:527.36px" width="24" height="22" viewBox="0 0 24 22"><path d="M16.5 1.7 H3.2 A1.5 1.5 0 0 0 1.7 3.2 V18 A1.5 1.5 0 0 0 3.2 19.5 H18.3 A1.5 1.5 0 0 0 19.8 18 V10.5" fill="none" stroke="#f2b01e" stroke-width="1.6"/><path d="M6 8.5 L10.6 13.6 L22.6 2.6" fill="none" stroke="#f2b01e" stroke-width="1.6"/></svg>
<svg class="r" style="left:1655px;top:525.86px" width="27" height="26" viewBox="0 0 27 26"><rect x="2" y="1.1" width="23.3" height="23.6" rx="2.3" fill="none" stroke="#b9c0c9" stroke-width="1.8"/><path d="M9.8 9.6 C9.8 7.4 11.4 6.1 13.3 6.1 C15.3 6.1 16.7 7.4 16.7 9.1 C16.7 11.6 13.4 12 13.4 15" fill="none" stroke="#aab1bb" stroke-width="1.7"/><circle cx="13.4" cy="18.8" r="1.1" fill="#aab1bb"/></svg>
<svg class="r" style="left:1698px;top:525.86px" width="21" height="26" viewBox="0 0 21 26"><rect x="1.8" y="3.2" width="17.6" height="21.4" rx="1.6" fill="none" stroke="#c0392b" stroke-width="1.5"/><path d="M5.5 4 L6.6 0.9 H14.2 L15.3 4 Z" fill="#c0392b"/><path d="M7.6 12.6 L12.9 17.4 M12.9 12.6 L7.6 17.4" stroke="#c0392b" stroke-width="1.6"/></svg>
<div class="t" style="left:341.8px;top:608.59px;font-size:18px;line-height:18px;color:#1b1b22;font-weight:700;letter-spacing:-0.95px;">Huey Donald</div>
<div class="t" style="left:341.8px;top:635.79px;font-size:18px;line-height:18px;color:#2b2b33;letter-spacing:-0.16px;">Papillons</div>
<div class="t" style="left:442px;width:600px;text-align:center;top:615.01px;font-size:17.5px;line-height:17.5px;color:#2b2b33;letter-spacing:0.8px;">AM</div>
<div class="t" style="left:442px;width:600px;text-align:center;top:653.71px;font-size:17.5px;line-height:17.5px;color:#2b2b33;letter-spacing:0.8px;">PM</div>
<div class="r" style="left:697px;top:640.29px;width:90px;height:1.0px;background:#d2d2d2"></div>
<div class="r" style="left:797.4px;top:605.79px;width:96.0px;height:35.0px;border:1px solid #b9bec7;border-radius:4px;background:linear-gradient(90deg,#7cfa98 58.5px,transparent 58.5px)"></div>
<div class="r" style="left:856.4px;top:605.79px;width:1.0px;height:35.0px;background:#b9bcc4"></div>
<div class="t" style="left:808.4px;top:616.24px;font-size:15px;line-height:15px;color:#3a3a40;">P</div>
<svg class="r" style="left:868.6px;top:617.39px" width="12" height="12" viewBox="0 0 12 12"><path d="M0.6 0.6 L11.4 11.4 M11.4 0.6 L0.6 11.4" stroke="#9fa6b1" stroke-width="1.1"/></svg>
<div class="r" style="left:797.4px;top:645.89px;width:96.0px;height:35.0px;border:1px solid #b9bec7;border-radius:4px;background:linear-gradient(90deg,#7cfa98 58.5px,transparent 58.5px)"></div>
<div class="r" style="left:856.4px;top:645.89px;width:1.0px;height:35.0px;background:#b9bcc4"></div>
<div class="t" style="left:808.4px;top:656.34px;font-size:15px;line-height:15px;color:#3a3a40;">P</div>
<svg class="r" style="left:868.6px;top:657.49px" width="12" height="12" viewBox="0 0 12 12"><path d="M0.6 0.6 L11.4 11.4 M11.4 0.6 L0.6 11.4" stroke="#9fa6b1" stroke-width="1.1"/></svg>
<div class="r" style="left:904.4px;top:605.79px;width:96.0px;height:35.0px;border:1px solid #b9bec7;border-radius:4px;background:linear-gradient(90deg,#7cfa98 58.5px,transparent 58.5px)"></div>
<div class="r" style="left:963.4px;top:605.79px;width:1.0px;height:35.0px;background:#b9bcc4"></div>
<div class="t" style="left:915.4px;top:616.24px;font-size:15px;line-height:15px;color:#3a3a40;">P</div>
<svg class="r" style="left:975.6px;top:617.39px" width="12" height="12" viewBox="0 0 12 12"><path d="M0.6 0.6 L11.4 11.4 M11.4 0.6 L0.6 11.4" stroke="#9fa6b1" stroke-width="1.1"/></svg>
<div class="r" style="left:904.4px;top:645.89px;width:96.0px;height:35.0px;border:1px solid #b9bec7;border-radius:4px;background:linear-gradient(90deg,#7cfa98 58.5px,transparent 58.5px)"></div>
<div class="r" style="left:963.4px;top:645.89px;width:1.0px;height:35.0px;background:#b9bcc4"></div>
<div class="t" style="left:915.4px;top:656.34px;font-size:15px;line-height:15px;color:#3a3a40;">P</div>
<svg class="r" style="left:975.6px;top:657.49px" width="12" height="12" viewBox="0 0 12 12"><path d="M0.6 0.6 L11.4 11.4 M11.4 0.6 L0.6 11.4" stroke="#9fa6b1" stroke-width="1.1"/></svg>
<div class="r" style="left:1010.6px;top:605.79px;width:95.99999999999989px;height:35.0px;border:1px solid #b9bec7;border-radius:4px;background:linear-gradient(90deg,#f0a1cf 58.5px,transparent 58.5px)"></div>
<div class="r" style="left:1069.6px;top:605.79px;width:1.0px;height:35.0px;background:#b9bcc4"></div>
<div class="t" style="left:1021.6px;top:616.24px;font-size:15px;line-height:15px;color:#3a3a40;">A</div>
<svg class="r" style="left:1081.8px;top:617.39px" width="12" height="12" viewBox="0 0 12 12"><path d="M0.6 0.6 L11.4 11.4 M11.4 0.6 L0.6 11.4" stroke="#9fa6b1" stroke-width="1.1"/></svg>
<div class="r" style="left:1010.6px;top:645.89px;width:95.99999999999989px;height:35.0px;border:1px solid #b9bec7;border-radius:4px;background:linear-gradient(90deg,#f0a1cf 58.5px,transparent 58.5px)"></div>
<div class="r" style="left:1069.6px;top:645.89px;width:1.0px;height:35.0px;background:#b9bcc4"></div>
<div class="t" style="left:1021.6px;top:656.34px;font-size:15px;line-height:15px;color:#3a3a40;">A</div>
<svg class="r" style="left:1081.8px;top:657.49px" width="12" height="12" viewBox="0 0 12 12"><path d="M0.6 0.6 L11.4 11.4 M11.4 0.6 L0.6 11.4" stroke="#9fa6b1" stroke-width="1.1"/></svg>
<div class="r" style="left:1117px;top:605.79px;width:96px;height:35.0px;border:1px solid #b9bec7;border-radius:4px;background:linear-gradient(90deg,#7cfa98 58.5px,transparent 58.5px)"></div>
<div class="r" style="left:1176px;top:605.79px;width:1px;height:35.0px;background:#b9bcc4"></div>
<div class="t" style="left:1128px;top:616.24px;font-size:15px;line-height:15px;color:#3a3a40;">P</div>
<svg class="r" style="left:1188.2px;top:617.39px" width="12" height="12" viewBox="0 0 12 12"><path d="M0.6 0.6 L11.4 11.4 M11.4 0.6 L0.6 11.4" stroke="#9fa6b1" stroke-width="1.1"/></svg>
<div class="r" style="left:1117px;top:645.89px;width:96px;height:35.0px;border:1px solid #b9bec7;border-radius:4px;background:linear-gradient(90deg,#7cfa98 58.5px,transparent 58.5px)"></div>
<div class="r" style="left:1176px;top:645.89px;width:1px;height:35.0px;background:#b9bcc4"></div>
<div class="t" style="left:1128px;top:656.34px;font-size:15px;line-height:15px;color:#3a3a40;">P</div>
<svg class="r" style="left:1188.2px;top:657.49px" width="12" height="12" viewBox="0 0 12 12"><path d="M0.6 0.6 L11.4 11.4 M11.4 0.6 L0.6 11.4" stroke="#9fa6b1" stroke-width="1.1"/></svg>
<div class="r" style="left:1224px;top:605.79px;width:96px;height:35.0px;border:1px solid #b9bec7;border-radius:4px;background:linear-gradient(90deg,#7cfa98 58.5px,transparent 58.5px)"></div>
<div class="r" style="left:1283px;top:605.79px;width:1px;height:35.0px;background:#b9bcc4"></div>
<div class="t" style="left:1235px;top:616.24px;font-size:15px;line-height:15px;color:#3a3a40;">P</div>
<svg class="r" style="left:1295.2px;top:617.39px" width="12" height="12" viewBox="0 0 12 12"><path d="M0.6 0.6 L11.4 11.4 M11.4 0.6 L0.6 11.4" stroke="#9fa6b1" stroke-width="1.1"/></svg>
<div class="r" style="left:1224px;top:645.89px;width:96px;height:35.0px;border:1px solid #b9bec7;border-radius:4px;background:linear-gradient(90deg,#7cfa98 58.5px,transparent 58.5px)"></div>
<div class="r" style="left:1283px;top:645.89px;width:1px;height:35.0px;background:#b9bcc4"></div>
<div class="t" style="left:1235px;top:656.34px;font-size:15px;line-height:15px;color:#3a3a40;">P</div>
<svg class="r" style="left:1295.2px;top:657.49px" width="12" height="12" viewBox="0 0 12 12"><path d="M0.6 0.6 L11.4 11.4 M11.4 0.6 L0.6 11.4" stroke="#9fa6b1" stroke-width="1.1"/></svg>
<div class="r" style="left:1330px;top:605.79px;width:96px;height:35.0px;background:#fff;border:1px solid #d3d6dc;border-radius:4px"></div>
<div class="t" style="left:1341px;top:616.39px;font-size:14px;line-height:14px;color:#666;">-</div>
<div class="r" style="left:1330px;top:645.89px;width:96px;height:35.0px;background:#fff;border:1px solid #d3d6dc;border-radius:4px"></div>
<div class="t" style="left:1341px;top:656.49px;font-size:14px;line-height:14px;color:#666;">-</div>
<div class="r" style="left:1437px;top:605.79px;width:96px;height:35.0px;background:#fff;border:1px solid #d3d6dc;border-radius:4px"></div>
<div class="t" style="left:1448px;top:616.39px;font-size:14px;line-height:14px;color:#666;">-</div>
<div class="r" style="left:1437px;top:645.89px;width:96px;height:35.0px;background:#fff;border:1px solid #d3d6dc;border-radius:4px"></div>
<div class="t" style="left:1448px;top:656.49px;font-size:14px;line-height:14px;color:#666;">-</div>
<svg class="r" style="left:1578px;top:611.29px" width="22" height="27" viewBox="0 0 22 27"><circle cx="10.6" cy="3.5" r="3.4" fill="#287873"/><path d="M1.9 4.4 L6.3 8.6 H15 L19.4 4.4" fill="none" stroke="#287873" stroke-width="2.4" stroke-linecap="round" stroke-linejoin="round"/><path d="M6.5 7.6 H14.8 V17.5 H14.4 V24.2 A1.4 1.4 0 0 1 11.6 24.2 V17.5 H9.7 V24.2 A1.4 1.4 0 0 1 6.9 24.2 V17.5 H6.5 Z" fill="#287873"/></svg>
<svg class="r" style="left:1617px;top:612.79px" width="24" height="22" viewBox="0 0 24 22"><path d="M16.5 1.7 H3.2 A1.5 1.5 0 0 0 1.7 3.2 V18 A1.5 1.5 0 0 0 3.2 19.5 H18.3 A1.5 1.5 0 0 0 19.8 18 V10.5" fill="none" stroke="#f2b01e" stroke-width="1.6"/><path d="M6 8.5 L10.6 13.6 L22.6 2.6" fill="none" stroke="#f2b01e" stroke-width="1.6"/></svg>
<svg class="r" style="left:1655px;top:611.29px" width="27" height="26" viewBox="0 0 27 26"><rect x="2" y="1.1" width="23.3" height="23.6" rx="2.3" fill="none" stroke="#b9c0c9" stroke-width="1.8"/><path d="M9.8 9.6 C9.8 7.4 11.4 6.1 13.3 6.1 C15.3 6.1 16.7 7.4 16.7 9.1 C16.7 11.6 13.4 12 13.4 15" fill="none" stroke="#aab1bb" stroke-width="1.7"/><circle cx="13.4" cy="18.8" r="1.1" fill="#aab1bb"/></svg>
<svg class="r" style="left:1698px;top:611.29px" width="21" height="26" viewBox="0 0 21 26"><rect x="1.8" y="3.2" width="17.6" height="21.4" rx="1.6" fill="none" stroke="#c0392b" stroke-width="1.5"/><path d="M5.5 4 L6.6 0.9 H14.2 L15.3 4 Z" fill="#c0392b"/><path d="M7.6 12.6 L12.9 17.4 M12.9 12.6 L7.6 17.4" stroke="#c0392b" stroke-width="1.6"/></svg>
<div class="r" style="left:336px;top:685.72px;width:1423px;height:85.43000000000006px;background:#f4f4f4"></div>
<div class="t" style="left:341.8px;top:694.02px;font-size:18px;line-height:18px;color:#1b1b22;font-weight:700;letter-spacing:-0.89px;">John McDonald</div>
<div class="t" style="left:341.8px;top:721.22px;font-size:18px;line-height:18px;color:#2b2b33;letter-spacing:-0.16px;">Papillons</div>
<div class="t" style="left:442px;width:600px;text-align:center;top:700.45px;font-size:17.5px;line-height:17.5px;color:#2b2b33;letter-spacing:0.8px;">AM</div>
<div class="t" style="left:442px;width:600px;text-align:center;top:739.14px;font-size:17.5px;line-height:17.5px;color:#2b2b33;letter-spacing:0.8px;">PM</div>
<div class="r" style="left:697px;top:725.72px;width:90px;height:1.0px;background:#d2d2d2"></div>
<div class="r" style="left:797.4px;top:691.22px;width:96.0px;height:35.0px;border:1px solid #b9bec7;border-radius:4px;background:linear-gradient(90deg,#7cfa98 58.5px,transparent 58.5px)"></div>
<div class="r" style="left:856.4px;top:691.22px;width:1.0px;height:35.0px;background:#b9bcc4"></div>
<div class="t" style="left:808.4px;top:701.67px;font-size:15px;line-height:15px;color:#3a3a40;">P</div>
<svg class="r" style="left:868.6px;top:702.82px" width="12" height="12" viewBox="0 0 12 12"><path d="M0.6 0.6 L11.4 11.4 M11.4 0.6 L0.6 11.4" stroke="#9fa6b1" stroke-width="1.1"/></svg>
<div class="r" style="left:797.4px;top:731.32px;width:96.0px;height:35.0px;border:1px solid #b9bec7;border-radius:4px;background:linear-gradient(90deg,#7cfa98 58.5px,transparent 58.5px)"></div>
<div class="r" style="left:856.4px;top:731.32px;width:1.0px;height:35.0px;background:#b9bcc4"></div>
<div class="t" style="left:808.4px;top:741.77px;font-size:15px;line-height:15px;color:#3a3a40;">P</div>
<svg class="r" style="left:868.6px;top:742.9200000000001px" width="12" height="12" viewBox="0 0 12 12"><path d="M0.6 0.6 L11.4 11.4 M11.4 0.6 L0.6 11.4" stroke="#9fa6b1" stroke-width="1.1"/></svg>
<div class="r" style="left:904.4px;top:691.22px;width:96.0px;height:35.0px;border:1px solid #b9bec7;border-radius:4px;background:linear-gradient(90deg,#7cfa98 58.5px,transparent 58.5px)"></div>
<div class="r" style="left:963.4px;top:691.22px;width:1.0px;height:35.0px;background:#b9bcc4"></div>
<div class="t" style="left:915.4px;top:701.67px;font-size:15px;line-height:15px;color:#3a3a40;">P</div>
<svg class="r" style="left:975.6px;top:702.82px" width="12" height="12" viewBox="0 0 12 12"><path d="M0.6 0.6 L11.4 11.4 M11.4 0.6 L0.6 11.4" stroke="#9fa6b1" stroke-width="1.1"/></svg>
<div class="r" style="left:904.4px;top:731.32px;width:96.0px;height:35.0px;border:1px solid #b9bec7;border-radius:4px;background:linear-gradient(90deg,#7cfa98 58.5px,transparent 58.5px)"></div>
<div class="r" style="left:963.4px;top:731.32px;width:1.0px;height:35.0px;background:#b9bcc4"></div>
<div class="t" style="left:915.4px;top:741.77px;font-size:15px;line-height:15px;color:#3a3a40;">P</div>
<svg class="r" style="left:975.6px;top:742.9200000000001px" width="12" height="12" viewBox="0 0 12 12"><path d="M0.6 0.6 L11.4 11.4 M11.4 0.6 L0.6 11.4" stroke="#9fa6b1" stroke-width="1.1"/></svg>
<div class="r" style="left:1010.6px;top:691.22px;width:95.99999999999989px;height:35.0px;border:1px solid #b9bec7;border-radius:4px;background:linear-gradient(90deg,#7cfa98 58.5px,transparent 58.5px)"></div>
<div class="r" style="left:1069.6px;top:691.22px;width:1.0px;height:35.0px;background:#b9bcc4"></div>
<div class="t" style="left:1021.6px;top:701.67px;font-size:15px;line-height:15px;color:#3a3a40;">P</div>
<svg class="r" style="left:1081.8px;top:702.82px" width="12" height="12" viewBox="0 0 12 12"><path d="M0.6 0.6 L11.4 11.4 M11.4 0.6 L0.6 11.4" stroke="#9fa6b1" stroke-width="1.1"/></svg>
<div class="r" style="left:1010.6px;top:731.32px;width:95.99999999999989px;height:35.0px;border:1px solid #b9bec7;border-radius:4px;background:linear-gradient(90deg,#7cfa98 58.5px,transparent 58.5px)"></div>
<div class="r" style="left:1069.6px;top:731.32px;width:1.0px;height:35.0px;background:#b9bcc4"></div>
<div class="t" style="left:1021.6px;top:741.77px;font-size:15px;line-height:15px;color:#3a3a40;">P</div>
<svg class="r" style="left:1081.8px;top:742.9200000000001px" width="12" height="12" viewBox="0 0 12 12"><path d="M0.6 0.6 L11.4 11.4 M11.4 0.6 L0.6 11.4" stroke="#9fa6b1" stroke-width="1.1"/></svg>
<div class="r" style="left:1117px;top:691.22px;width:96px;height:35.0px;border:1px solid #b9bec7;border-radius:4px;background:linear-gradient(90deg,#7cfa98 58.5px,transparent 58.5px)"></div>
<div class="r" style="left:1176px;top:691.22px;width:1px;height:35.0px;background:#b9bcc4"></div>
<div class="t" style="left:1128px;top:701.67px;font-size:15px;line-height:15px;color:#3a3a40;">P</div>
<svg class="r" style="left:1188.2px;top:702.82px" width="12" height="12" viewBox="0 0 12 12"><path d="M0.6 0.6 L11.4 11.4 M11.4 0.6 L0.6 11.4" stroke="#9fa6b1" stroke-width="1.1"/></svg>
<div class="r" style="left:1117px;top:731.32px;width:96px;height:35.0px;border:1px solid #b9bec7;border-radius:4px;background:linear-gradient(90deg,#7cfa98 58.5px,transparent 58.5px)"></div>
<div class="r" style="left:1176px;top:731.32px;width:1px;height:35.0px;background:#b9bcc4"></div>
<div class="t" style="left:1128px;top:741.77px;font-size:15px;line-height:15px;color:#3a3a40;">P</div>
<svg class="r" style="left:1188.2px;top:742.9200000000001px" width="12" height="12" viewBox="0 0 12 12"><path d="M0.6 0.6 L11.4 11.4 M11.4 0.6 L0.6 11.4" stroke="#9fa6b1" stroke-width="1.1"/></svg>
<div class="r" style="left:1224px;top:691.22px;width:96px;height:35.0px;border:1px solid #b9bec7;border-radius:4px;background:linear-gradient(90deg,#7cfa98 58.5px,transparent 58.5px)"></div>
<div class="r" style="left:1283px;top:691.22px;width:1px;height:35.0px;background:#b9bcc4"></div>
<div class="t" style="left:1235px;top:701.67px;font-size:15px;line-height:15px;color:#3a3a40;">P</div>
<svg class="r" style="left:1295.2px;top:702.82px" width="12" height="12" viewBox="0 0 12 12"><path d="M0.6 0.6 L11.4 11.4 M11.4 0.6 L0.6 11.4" stroke="#9fa6b1" stroke-width="1.1"/></svg>
<div class="r" style="left:1224px;top:731.32px;width:96px;height:35.0px;border:1px solid #b9bec7;border-radius:4px;background:linear-gradient(90deg,#7cfa98 58.5px,transparent 58.5px)"></div>
<div class="r" style="left:1283px;top:731.32px;width:1px;height:35.0px;background:#b9bcc4"></div>
<div class="t" style="left:1235px;top:741.77px;font-size:15px;line-height:15px;color:#3a3a40;">P</div>
<svg class="r" style="left:1295.2px;top:742.9200000000001px" width="12" height="12" viewBox="0 0 12 12"><path d="M0.6 0.6 L11.4 11.4 M11.4 0.6 L0.6 11.4" stroke="#9fa6b1" stroke-width="1.1"/></svg>
<div class="r" style="left:1330px;top:691.22px;width:96px;height:35.0px;background:#fff;border:1px solid #d3d6dc;border-radius:4px"></div>
<div class="t" style="left:1341px;top:701.82px;font-size:14px;line-height:14px;color:#666;">-</div>
<div class="r" style="left:1330px;top:731.32px;width:96px;height:35.0px;background:#fff;border:1px solid #d3d6dc;border-radius:4px"></div>
<div class="t" style="left:1341px;top:741.92px;font-size:14px;line-height:14px;color:#666;">-</div>
<div class="r" style="left:1437px;top:691.22px;width:96px;height:35.0px;background:#fff;border:1px solid #d3d6dc;border-radius:4px"></div>
<div class="t" style="left:1448px;top:701.82px;font-size:14px;line-height:14px;color:#666;">-</div>
<div class="r" style="left:1437px;top:731.32px;width:96px;height:35.0px;background:#fff;border:1px solid #d3d6dc;border-radius:4px"></div>
<div class="t" style="left:1448px;top:741.92px;font-size:14px;line-height:14px;color:#666;">-</div>
<svg class="r" style="left:1578px;top:696.72px" width="22" height="27" viewBox="0 0 22 27"><circle cx="10.6" cy="3.5" r="3.4" fill="#287873"/><path d="M1.9 4.4 L6.3 8.6 H15 L19.4 4.4" fill="none" stroke="#287873" stroke-width="2.4" stroke-linecap="round" stroke-linejoin="round"/><path d="M6.5 7.6 H14.8 V17.5 H14.4 V24.2 A1.4 1.4 0 0 1 11.6 24.2 V17.5 H9.7 V24.2 A1.4 1.4 0 0 1 6.9 24.2 V17.5 H6.5 Z" fill="#287873"/></svg>
<svg class="r" style="left:1617px;top:698.22px" width="24" height="22" viewBox="0 0 24 22"><path d="M16.5 1.7 H3.2 A1.5 1.5 0 0 0 1.7 3.2 V18 A1.5 1.5 0 0 0 3.2 19.5 H18.3 A1.5 1.5 0 0 0 19.8 18 V10.5" fill="none" stroke="#f2b01e" stroke-width="1.6"/><path d="M6 8.5 L10.6 13.6 L22.6 2.6" fill="none" stroke="#f2b01e" stroke-width="1.6"/></svg>
<svg class="r" style="left:1655px;top:696.72px" width="27" height="26" viewBox="0 0 27 26"><rect x="2" y="1.1" width="23.3" height="23.6" rx="2.3" fill="none" stroke="#b9c0c9" stroke-width="1.8"/><path d="M9.8 9.6 C9.8 7.4 11.4 6.1 13.3 6.1 C15.3 6.1 16.7 7.4 16.7 9.1 C16.7 11.6 13.4 12 13.4 15" fill="none" stroke="#aab1bb" stroke-width="1.7"/><circle cx="13.4" cy="18.8" r="1.1" fill="#aab1bb"/></svg>
<svg class="r" style="left:1698px;top:696.72px" width="21" height="26" viewBox="0 0 21 26"><rect x="1.8" y="3.2" width="17.6" height="21.4" rx="1.6" fill="none" stroke="#c0392b" stroke-width="1.5"/><path d="M5.5 4 L6.6 0.9 H14.2 L15.3 4 Z" fill="#c0392b"/><path d="M7.6 12.6 L12.9 17.4 M12.9 12.6 L7.6 17.4" stroke="#c0392b" stroke-width="1.6"/></svg>
<div class="t" style="left:341.8px;top:779.45px;font-size:18px;line-height:18px;color:#1b1b22;font-weight:700;letter-spacing:-0.93px;">Johnathan Acuna</div>
<div class="t" style="left:341.8px;top:806.65px;font-size:18px;line-height:18px;color:#2b2b33;letter-spacing:-0.16px;">Papillons</div>
<div class="t" style="left:442px;width:600px;text-align:center;top:785.88px;font-size:17.5px;line-height:17.5px;color:#2b2b33;letter-spacing:0.8px;">AM</div>
<div class="t" style="left:442px;width:600px;text-align:center;top:824.58px;font-size:17.5px;line-height:17.5px;color:#2b2b33;letter-spacing:0.8px;">PM</div>
<div class="r" style="left:697px;top:811.1500000000001px;width:90px;height:1.0px;background:#d2d2d2"></div>
<div class="r" style="left:797.4px;top:776.6500000000001px;width:96.0px;height:35.0px;border:1px solid #b9bec7;border-radius:4px;background:linear-gradient(90deg,#7cfa98 58.5px,transparent 58.5px)"></div>
<div class="r" style="left:856.4px;top:776.6500000000001px;width:1.0px;height:35.0px;background:#b9bcc4"></div>
<div class="t" style="left:808.4px;top:787.10px;font-size:15px;line-height:15px;color:#3a3a40;">P</div>
<svg class="r" style="left:868.6px;top:788.2500000000001px" width="12" height="12" viewBox="0 0 12 12"><path d="M0.6 0.6 L11.4 11.4 M11.4 0.6 L0.6 11.4" stroke="#9fa6b1" stroke-width="1.1"/></svg>
<div class="r" style="left:797.4px;top:816.7500000000001px;width:96.0px;height:35.0px;border:1px solid #b9bec7;border-radius:4px;background:linear-gradient(90deg,#7cfa98 58.5px,transparent 58.5px)"></div>
<div class="r" style="left:856.4px;top:816.7500000000001px;width:1.0px;height:35.0px;background:#b9bcc4"></div>
<div class="t" style="left:808.4px;top:827.20px;font-size:15px;line-height:15px;color:#3a3a40;">P</div>
<svg class="r" style="left:868.6px;top:828.3500000000001px" width="12" height="12" viewBox="0 0 12 12"><path d="M0.6 0.6 L11.4 11.4 M11.4 0.6 L0.6 11.4" stroke="#9fa6b1" stroke-width="1.1"/></svg>
<div class="r" style="left:904.4px;top:776.6500000000001px;width:96.0px;height:35.0px;border:1px solid #b9bec7;border-radius:4px;background:linear-gradient(90deg,#7cfa98 58.5px,transparent 58.5px)"></div>
<div class="r" style="left:963.4px;top:776.6500000000001px;width:1.0px;height:35.0px;background:#b9bcc4"></div>
<div class="t" style="left:915.4px;top:787.10px;font-size:15px;line-height:15px;color:#3a3a40;">P</div>
<svg class="r" style="left:975.6px;top:788.2500000000001px" width="12" height="12" viewBox="0 0 12 12"><path d="M0.6 0.6 L11.4 11.4 M11.4 0.6 L0.6 11.4" stroke="#9fa6b1" stroke-width="1.1"/></svg>
<div class="r" style="left:904.4px;top:816.7500000000001px;width:96.0px;height:35.0px;border:1px solid #b9bec7;border-radius:4px;background:linear-gradient(90deg,#7cfa98 58.5px,transparent 58.5px)"></div>
<div class="r" style="left:963.4px;top:816.7500000000001px;width:1.0px;height:35.0px;background:#b9bcc4"></div>
<div class="t" style="left:915.4px;top:827.20px;font-size:15px;line-height:15px;color:#3a3a40;">P</div>
<svg class="r" style="left:975.6px;top:828.3500000000001px" width="12" height="12" viewBox="0 0 12 12"><path d="M0.6 0.6 L11.4 11.4 M11.4 0.6 L0.6 11.4" stroke="#9fa6b1" stroke-width="1.1"/></svg>
<div class="r" style="left:1010.6px;top:776.6500000000001px;width:95.99999999999989px;height:35.0px;border:1px solid #b9bec7;border-radius:4px;background:linear-gradient(90deg,#7cfa98 58.5px,transparent 58.5px)"></div>
<div class="r" style="left:1069.6px;top:776.6500000000001px;width:1.0px;height:35.0px;background:#b9bcc4"></div>
<div class="t" style="left:1021.6px;top:787.10px;font-size:15px;line-height:15px;color:#3a3a40;">P</div>
<svg class="r" style="left:1081.8px;top:788.2500000000001px" width="12" height="12" viewBox="0 0 12 12"><path d="M0.6 0.6 L11.4 11.4 M11.4 0.6 L0.6 11.4" stroke="#9fa6b1" stroke-width="1.1"/></svg>
<div class="r" style="left:1010.6px;top:816.7500000000001px;width:95.99999999999989px;height:35.0px;border:1px solid #b9bec7;border-radius:4px;background:linear-gradient(90deg,#7cfa98 58.5px,transparent 58.5px)"></div>
<div class="r" style="left:1069.6px;top:816.7500000000001px;width:1.0px;height:35.0px;background:#b9bcc4"></div>
<div class="t" style="left:1021.6px;top:827.20px;font-size:15px;line-height:15px;color:#3a3a40;">P</div>
<svg class="r" style="left:1081.8px;top:828.3500000000001px" width="12" height="12" viewBox="0 0 12 12"><path d="M0.6 0.6 L11.4 11.4 M11.4 0.6 L0.6 11.4" stroke="#9fa6b1" stroke-width="1.1"/></svg>
<div class="r" style="left:1117px;top:776.6500000000001px;width:96px;height:35.0px;border:1px solid #b9bec7;border-radius:4px;background:linear-gradient(90deg,#7cfa98 58.5px,transparent 58.5px)"></div>
<div class="r" style="left:1176px;top:776.6500000000001px;width:1px;height:35.0px;background:#b9bcc4"></div>
<div class="t" style="left:1128px;top:787.10px;font-size:15px;line-height:15px;color:#3a3a40;">P</div>
<svg class="r" style="left:1188.2px;top:788.2500000000001px" width="12" height="12" viewBox="0 0 12 12"><path d="M0.6 0.6 L11.4 11.4 M11.4 0.6 L0.6 11.4" stroke="#9fa6b1" stroke-width="1.1"/></svg>
<div class="r" style="left:1117px;top:816.7500000000001px;width:96px;height:35.0px;border:1px solid #b9bec7;border-radius:4px;background:linear-gradient(90deg,#7cfa98 58.5px,transparent 58.5px)"></div>
<div class="r" style="left:1176px;top:816.7500000000001px;width:1px;height:35.0px;background:#b9bcc4"></div>
<div class="t" style="left:1128px;top:827.20px;font-size:15px;line-height:15px;color:#3a3a40;">P</div>
<svg class="r" style="left:1188.2px;top:828.3500000000001px" width="12" height="12" viewBox="0 0 12 12"><path d="M0.6 0.6 L11.4 11.4 M11.4 0.6 L0.6 11.4" stroke="#9fa6b1" stroke-width="1.1"/></svg>
<div class="r" style="left:1224px;top:776.6500000000001px;width:96px;height:35.0px;border:1px solid #b9bec7;border-radius:4px;background:linear-gradient(90deg,#7cfa98 58.5px,transparent 58.5px)"></div>
<div class="r" style="left:1283px;top:776.6500000000001px;width:1px;height:35.0px;background:#b9bcc4"></div>
<div class="t" style="left:1235px;top:787.10px;font-size:15px;line-height:15px;color:#3a3a40;">P</div>
<svg class="r" style="left:1295.2px;top:788.2500000000001px" width="12" height="12" viewBox="0 0 12 12"><path d="M0.6 0.6 L11.4 11.4 M11.4 0.6 L0.6 11.4" stroke="#9fa6b1" stroke-width="1.1"/></svg>
<div class="r" style="left:1224px;top:816.7500000000001px;width:96px;height:35.0px;border:1px solid #b9bec7;border-radius:4px;background:linear-gradient(90deg,#7cfa98 58.5px,transparent 58.5px)"></div>
<div class="r" style="left:1283px;top:816.7500000000001px;width:1px;height:35.0px;background:#b9bcc4"></div>
<div class="t" style="left:1235px;top:827.20px;font-size:15px;line-height:15px;color:#3a3a40;">P</div>
<svg class="r" style="left:1295.2px;top:828.3500000000001px" width="12" height="12" viewBox="0 0 12 12"><path d="M0.6 0.6 L11.4 11.4 M11.4 0.6 L0.6 11.4" stroke="#9fa6b1" stroke-width="1.1"/></svg>
<div class="r" style="left:1330px;top:776.6500000000001px;width:96px;height:35.0px;background:#fff;border:1px solid #d3d6dc;border-radius:4px"></div>
<div class="t" style="left:1341px;top:787.25px;font-size:14px;line-height:14px;color:#666;">-</div>
<div class="r" style="left:1330px;top:816.7500000000001px;width:96px;height:35.0px;background:#fff;border:1px solid #d3d6dc;border-radius:4px"></div>
<div class="t" style="left:1341px;top:827.35px;font-size:14px;line-height:14px;color:#666;">-</div>
<div class="r" style="left:1437px;top:776.6500000000001px;width:96px;height:35.0px;background:#fff;border:1px solid #d3d6dc;border-radius:4px"></div>
<div class="t" style="left:1448px;top:787.25px;font-size:14px;line-height:14px;color:#666;">-</div>
<div class="r" style="left:1437px;top:816.7500000000001px;width:96px;height:35.0px;background:#fff;border:1px solid #d3d6dc;border-radius:4px"></div>
<div class="t" style="left:1448px;top:827.35px;font-size:14px;line-height:14px;color:#666;">-</div>
<svg class="r" style="left:1578px;top:782.1500000000001px" width="22" height="27" viewBox="0 0 22 27"><circle cx="10.6" cy="3.5" r="3.4" fill="#287873"/><path d="M1.9 4.4 L6.3 8.6 H15 L19.4 4.4" fill="none" stroke="#287873" stroke-width="2.4" stroke-linecap="round" stroke-linejoin="round"/><path d="M6.5 7.6 H14.8 V17.5 H14.4 V24.2 A1.4 1.4 0 0 1 11.6 24.2 V17.5 H9.7 V24.2 A1.4 1.4 0 0 1 6.9 24.2 V17.5 H6.5 Z" fill="#287873"/></svg>
<svg class="r" style="left:1617px;top:783.6500000000001px" width="24" height="22" viewBox="0 0 24 22"><path d="M16.5 1.7 H3.2 A1.5 1.5 0 0 0 1.7 3.2 V18 A1.5 1.5 0 0 0 3.2 19.5 H18.3 A1.5 1.5 0 0 0 19.8 18 V10.5" fill="none" stroke="#f2b01e" stroke-width="1.6"/><path d="M6 8.5 L10.6 13.6 L22.6 2.6" fill="none" stroke="#f2b01e" stroke-width="1.6"/></svg>
<svg class="r" style="left:1655px;top:782.1500000000001px" width="27" height="26" viewBox="0 0 27 26"><rect x="2" y="1.1" width="23.3" height="23.6" rx="2.3" fill="none" stroke="#b9c0c9" stroke-width="1.8"/><path d="M9.8 9.6 C9.8 7.4 11.4 6.1 13.3 6.1 C15.3 6.1 16.7 7.4 16.7 9.1 C16.7 11.6 13.4 12 13.4 15" fill="none" stroke="#aab1bb" stroke-width="1.7"/><circle cx="13.4" cy="18.8" r="1.1" fill="#aab1bb"/></svg>
<svg class="r" style="left:1698px;top:782.1500000000001px" width="21" height="26" viewBox="0 0 21 26"><rect x="1.8" y="3.2" width="17.6" height="21.4" rx="1.6" fill="none" stroke="#c0392b" stroke-width="1.5"/><path d="M5.5 4 L6.6 0.9 H14.2 L15.3 4 Z" fill="#c0392b"/><path d="M7.6 12.6 L12.9 17.4 M12.9 12.6 L7.6 17.4" stroke="#c0392b" stroke-width="1.6"/></svg>
<div class="r" style="left:336px;top:856.58px;width:1423px;height:85.42999999999995px;background:#f4f4f4"></div>
<div class="t" style="left:341.8px;top:864.88px;font-size:18px;line-height:18px;color:#1b1b22;font-weight:700;letter-spacing:-0.92px;">Pablo Kokoko</div>
<div class="t" style="left:341.8px;top:892.08px;font-size:18px;line-height:18px;color:#2b2b33;letter-spacing:-0.16px;">Papillons</div>
<div class="t" style="left:442px;width:600px;text-align:center;top:871.31px;font-size:17.5px;line-height:17.5px;color:#2b2b33;letter-spacing:0.8px;">AM</div>
<div class="t" style="left:442px;width:600px;text-align:center;top:910.00px;font-size:17.5px;line-height:17.5px;color:#2b2b33;letter-spacing:0.8px;">PM</div>
<div class="r" style="left:697px;top:896.58px;width:90px;height:1.0px;background:#d2d2d2"></div>
<div class="r" style="left:797.4px;top:862.08px;width:96.0px;height:35.0px;border:1px solid #b9bec7;border-radius:4px;background:linear-gradient(90deg,#7cfa98 58.5px,transparent 58.5px)"></div>
<div class="r" style="left:856.4px;top:862.08px;width:1.0px;height:35.0px;background:#b9bcc4"></div>
<div class="t" style="left:808.4px;top:872.53px;font-size:15px;line-height:15px;color:#3a3a40;">P</div>
<svg class="r" style="left:868.6px;top:873.6800000000001px" width="12" height="12" viewBox="0 0 12 12"><path d="M0.6 0.6 L11.4 11.4 M11.4 0.6 L0.6 11.4" stroke="#9fa6b1" stroke-width="1.1"/></svg>
<div class="r" style="left:797.4px;top:902.1800000000001px;width:96.0px;height:35.0px;border:1px solid #b9bec7;border-radius:4px;background:linear-gradient(90deg,#7cfa98 58.5px,transparent 58.5px)"></div>
<div class="r" style="left:856.4px;top:902.1800000000001px;width:1.0px;height:35.0px;background:#b9bcc4"></div>
<div class="t" style="left:808.4px;top:912.63px;font-size:15px;line-height:15px;color:#3a3a40;">P</div>
<svg class="r" style="left:868.6px;top:913.7800000000001px" width="12" height="12" viewBox="0 0 12 12"><path d="M0.6 0.6 L11.4 11.4 M11.4 0.6 L0.6 11.4" stroke="#9fa6b1" stroke-width="1.1"/></svg>
<div class="r" style="left:904.4px;top:862.08px;width:96.0px;height:35.0px;border:1px solid #b9bec7;border-radius:4px;background:linear-gradient(90deg,#7cfa98 58.5px,transparent 58.5px)"></div>
<div class="r" style="left:963.4px;top:862.08px;width:1.0px;height:35.0px;background:#b9bcc4"></div>
<div class="t" style="left:915.4px;top:872.53px;font-size:15px;line-height:15px;color:#3a3a40;">P</div>
<svg class="r" style="left:975.6px;top:873.6800000000001px" width="12" height="12" viewBox="0 0 12 12"><path d="M0.6 0.6 L11.4 11.4 M11.4 0.6 L0.6 11.4" stroke="#9fa6b1" stroke-width="1.1"/></svg>
<div class="r" style="left:904.4px;top:902.1800000000001px;width:96.0px;height:35.0px;border:1px solid #b9bec7;border-radius:4px;background:linear-gradient(90deg,#7cfa98 58.5px,transparent 58.5px)"></div>
<div class="r" style="left:963.4px;top:902.1800000000001px;width:1.0px;height:35.0px;background:#b9bcc4"></div>
<div class="t" style="left:915.4px;top:912.63px;font-size:15px;line-height:15px;color:#3a3a40;">P</div>
<svg class="r" style="left:975.6px;top:913.7800000000001px" width="12" height="12" viewBox="0 0 12 12"><path d="M0.6 0.6 L11.4 11.4 M11.4 0.6 L0.6 11.4" stroke="#9fa6b1" stroke-width="1.1"/></svg>
<div class="r" style="left:1010.6px;top:862.08px;width:95.99999999999989px;height:35.0px;border:1px solid #b9bec7;border-radius:4px;background:linear-gradient(90deg,#7cfa98 58.5px,transparent 58.5px)"></div>
<div class="r" style="left:1069.6px;top:862.08px;width:1.0px;height:35.0px;background:#b9bcc4"></div>
<div class="t" style="left:1021.6px;top:872.53px;font-size:15px;line-height:15px;color:#3a3a40;">P</div>
<svg class="r" style="left:1081.8px;top:873.6800000000001px" width="12" height="12" viewBox="0 0 12 12"><path d="M0.6 0.6 L11.4 11.4 M11.4 0.6 L0.6 11.4" stroke="#9fa6b1" stroke-width="1.1"/></svg>
<div class="r" style="left:1010.6px;top:902.1800000000001px;width:95.99999999999989px;height:35.0px;border:1px solid #b9bec7;border-radius:4px;background:linear-gradient(90deg,#7cfa98 58.5px,transparent 58.5px)"></div>
<div class="r" style="left:1069.6px;top:902.1800000000001px;width:1.0px;height:35.0px;background:#b9bcc4"></div>
<div class="t" style="left:1021.6px;top:912.63px;font-size:15px;line-height:15px;color:#3a3a40;">P</div>
<svg class="r" style="left:1081.8px;top:913.7800000000001px" width="12" height="12" viewBox="0 0 12 12"><path d="M0.6 0.6 L11.4 11.4 M11.4 0.6 L0.6 11.4" stroke="#9fa6b1" stroke-width="1.1"/></svg>
<div class="r" style="left:1117px;top:862.08px;width:96px;height:35.0px;border:1px solid #b9bec7;border-radius:4px;background:linear-gradient(90deg,#7cfa98 58.5px,transparent 58.5px)"></div>
<div class="r" style="left:1176px;top:862.08px;width:1px;height:35.0px;background:#b9bcc4"></div>
<div class="t" style="left:1128px;top:872.53px;font-size:15px;line-height:15px;color:#3a3a40;">P</div>
<svg class="r" style="left:1188.2px;top:873.6800000000001px" width="12" height="12" viewBox="0 0 12 12"><path d="M0.6 0.6 L11.4 11.4 M11.4 0.6 L0.6 11.4" stroke="#9fa6b1" stroke-width="1.1"/></svg>
<div class="r" style="left:1117px;top:902.1800000000001px;width:96px;height:35.0px;border:1px solid #b9bec7;border-radius:4px;background:linear-gradient(90deg,#7cfa98 58.5px,transparent 58.5px)"></div>
<div class="r" style="left:1176px;top:902.1800000000001px;width:1px;height:35.0px;background:#b9bcc4"></div>
<div class="t" style="left:1128px;top:912.63px;font-size:15px;line-height:15px;color:#3a3a40;">P</div>
<svg class="r" style="left:1188.2px;top:913.7800000000001px" width="12" height="12" viewBox="0 0 12 12"><path d="M0.6 0.6 L11.4 11.4 M11.4 0.6 L0.6 11.4" stroke="#9fa6b1" stroke-width="1.1"/></svg>
<div class="r" style="left:1224px;top:862.08px;width:96px;height:35.0px;border:1px solid #b9bec7;border-radius:4px;background:linear-gradient(90deg,#7cfa98 58.5px,transparent 58.5px)"></div>
<div class="r" style="left:1283px;top:862.08px;width:1px;height:35.0px;background:#b9bcc4"></div>
<div class="t" style="left:1235px;top:872.53px;font-size:15px;line-height:15px;color:#3a3a40;">P</div>
<svg class="r" style="left:1295.2px;top:873.6800000000001px" width="12" height="12" viewBox="0 0 12 12"><path d="M0.6 0.6 L11.4 11.4 M11.4 0.6 L0.6 11.4" stroke="#9fa6b1" stroke-width="1.1"/></svg>
<div class="r" style="left:1224px;top:902.1800000000001px;width:96px;height:35.0px;border:1px solid #b9bec7;border-radius:4px;background:linear-gradient(90deg,#7cfa98 58.5px,transparent 58.5px)"></div>
<div class="r" style="left:1283px;top:902.1800000000001px;width:1px;height:35.0px;background:#b9bcc4"></div>
<div class="t" style="left:1235px;top:912.63px;font-size:15px;line-height:15px;color:#3a3a40;">P</div>
<svg class="r" style="left:1295.2px;top:913.7800000000001px" width="12" height="12" viewBox="0 0 12 12"><path d="M0.6 0.6 L11.4 11.4 M11.4 0.6 L0.6 11.4" stroke="#9fa6b1" stroke-width="1.1"/></svg>
<div class="r" style="left:1330px;top:862.08px;width:96px;height:35.0px;background:#fff;border:1px solid #d3d6dc;border-radius:4px"></div>
<div class="t" style="left:1341px;top:872.68px;font-size:14px;line-height:14px;color:#666;">-</div>
<div class="r" style="left:1330px;top:902.1800000000001px;width:96px;height:35.0px;background:#fff;border:1px solid #d3d6dc;border-radius:4px"></div>
<div class="t" style="left:1341px;top:912.78px;font-size:14px;line-height:14px;color:#666;">-</div>
<div class="r" style="left:1437px;top:862.08px;width:96px;height:35.0px;background:#fff;border:1px solid #d3d6dc;border-radius:4px"></div>
<div class="t" style="left:1448px;top:872.68px;font-size:14px;line-height:14px;color:#666;">-</div>
<div class="r" style="left:1437px;top:902.1800000000001px;width:96px;height:35.0px;background:#fff;border:1px solid #d3d6dc;border-radius:4px"></div>
<div class="t" style="left:1448px;top:912.78px;font-size:14px;line-height:14px;color:#666;">-</div>
<svg class="r" style="left:1578px;top:867.58px" width="22" height="27" viewBox="0 0 22 27"><circle cx="10.6" cy="3.5" r="3.4" fill="#287873"/><path d="M1.9 4.4 L6.3 8.6 H15 L19.4 4.4" fill="none" stroke="#287873" stroke-width="2.4" stroke-linecap="round" stroke-linejoin="round"/><path d="M6.5 7.6 H14.8 V17.5 H14.4 V24.2 A1.4 1.4 0 0 1 11.6 24.2 V17.5 H9.7 V24.2 A1.4 1.4 0 0 1 6.9 24.2 V17.5 H6.5 Z" fill="#287873"/></svg>
<svg class="r" style="left:1617px;top:869.08px" width="24" height="22" viewBox="0 0 24 22"><path d="M16.5 1.7 H3.2 A1.5 1.5 0 0 0 1.7 3.2 V18 A1.5 1.5 0 0 0 3.2 19.5 H18.3 A1.5 1.5 0 0 0 19.8 18 V10.5" fill="none" stroke="#f2b01e" stroke-width="1.6"/><path d="M6 8.5 L10.6 13.6 L22.6 2.6" fill="none" stroke="#f2b01e" stroke-width="1.6"/></svg>
<svg class="r" style="left:1655px;top:867.58px" width="27" height="26" viewBox="0 0 27 26"><rect x="2" y="1.1" width="23.3" height="23.6" rx="2.3" fill="none" stroke="#b9c0c9" stroke-width="1.8"/><path d="M9.8 9.6 C9.8 7.4 11.4 6.1 13.3 6.1 C15.3 6.1 16.7 7.4 16.7 9.1 C16.7 11.6 13.4 12 13.4 15" fill="none" stroke="#aab1bb" stroke-width="1.7"/><circle cx="13.4" cy="18.8" r="1.1" fill="#aab1bb"/></svg>
<svg class="r" style="left:1698px;top:867.58px" width="21" height="26" viewBox="0 0 21 26"><rect x="1.8" y="3.2" width="17.6" height="21.4" rx="1.6" fill="none" stroke="#c0392b" stroke-width="1.5"/><path d="M5.5 4 L6.6 0.9 H14.2 L15.3 4 Z" fill="#c0392b"/><path d="M7.6 12.6 L12.9 17.4 M12.9 12.6 L7.6 17.4" stroke="#c0392b" stroke-width="1.6"/></svg>
<div class="t" style="left:341.8px;top:950.31px;font-size:18px;line-height:18px;color:#1b1b22;font-weight:700;letter-spacing:-0.75px;">Sylvester Howard</div>
<div class="t" style="left:341.8px;top:977.51px;font-size:18px;line-height:18px;color:#2b2b33;letter-spacing:-0.16px;">Papillons</div>
<div class="t" style="left:442px;width:600px;text-align:center;top:956.74px;font-size:17.5px;line-height:17.5px;color:#2b2b33;letter-spacing:0.8px;">AM</div>
<div class="t" style="left:442px;width:600px;text-align:center;top:995.43px;font-size:17.5px;line-height:17.5px;color:#2b2b33;letter-spacing:0.8px;">PM</div>
<div class="r" style="left:697px;top:982.01px;width:90px;height:1.0px;background:#d2d2d2"></div>
<div class="r" style="left:797.4px;top:947.51px;width:96.0px;height:35.0px;border:1px solid #b9bec7;border-radius:4px;background:linear-gradient(90deg,#7cfa98 58.5px,transparent 58.5px)"></div>
<div class="r" style="left:856.4px;top:947.51px;width:1.0px;height:35.0px;background:#b9bcc4"></div>
<div class="t" style="left:808.4px;top:957.96px;font-size:15px;line-height:15px;color:#3a3a40;">P</div>
<svg class="r" style="left:868.6px;top:959.11px" width="12" height="12" viewBox="0 0 12 12"><path d="M0.6 0.6 L11.4 11.4 M11.4 0.6 L0.6 11.4" stroke="#9fa6b1" stroke-width="1.1"/></svg>
<div class="r" style="left:797.4px;top:987.61px;width:96.0px;height:35.0px;border:1px solid #b9bec7;border-radius:4px;background:linear-gradient(90deg,#7cfa98 58.5px,transparent 58.5px)"></div>
<div class="r" style="left:856.4px;top:987.61px;width:1.0px;height:35.0px;background:#b9bcc4"></div>
<div class="t" style="left:808.4px;top:998.06px;font-size:15px;line-height:15px;color:#3a3a40;">P</div>
<svg class="r" style="left:868.6px;top:999.21px" width="12" height="12" viewBox="0 0 12 12"><path d="M0.6 0.6 L11.4 11.4 M11.4 0.6 L0.6 11.4" stroke="#9fa6b1" stroke-width="1.1"/></svg>
<div class="r" style="left:904.4px;top:947.51px;width:96.0px;height:35.0px;border:1px solid #b9bec7;border-radius:4px;background:linear-gradient(90deg,#7cfa98 58.5px,transparent 58.5px)"></div>
<div class="r" style="left:963.4px;top:947.51px;width:1.0px;height:35.0px;background:#b9bcc4"></div>
<div class="t" style="left:915.4px;top:957.96px;font-size:15px;line-height:15px;color:#3a3a40;">P</div>
<svg class="r" style="left:975.6px;top:959.11px" width="12" height="12" viewBox="0 0 12 12"><path d="M0.6 0.6 L11.4 11.4 M11.4 0.6 L0.6 11.4" stroke="#9fa6b1" stroke-width="1.1"/></svg>
<div class="r" style="left:904.4px;top:987.61px;width:96.0px;height:35.0px;border:1px solid #b9bec7;border-radius:4px;background:linear-gradient(90deg,#7cfa98 58.5px,transparent 58.5px)"></div>
<div class="r" style="left:963.4px;top:987.61px;width:1.0px;height:35.0px;background:#b9bcc4"></div>
<div class="t" style="left:915.4px;top:998.06px;font-size:15px;line-height:15px;color:#3a3a40;">P</div>
<svg class="r" style="left:975.6px;top:999.21px" width="12" height="12" viewBox="0 0 12 12"><path d="M0.6 0.6 L11.4 11.4 M11.4 0.6 L0.6 11.4" stroke="#9fa6b1" stroke-width="1.1"/></svg>
<div class="r" style="left:1010.6px;top:947.51px;width:95.99999999999989px;height:35.0px;border:1px solid #b9bec7;border-radius:4px;background:linear-gradient(90deg,#f0a1cf 58.5px,transparent 58.5px)"></div>
<div class="r" style="left:1069.6px;top:947.51px;width:1.0px;height:35.0px;background:#b9bcc4"></div>
<div class="t" style="left:1021.6px;top:957.96px;font-size:15px;line-height:15px;color:#3a3a40;">A</div>
<svg class="r" style="left:1081.8px;top:959.11px" width="12" height="12" viewBox="0 0 12 12"><path d="M0.6 0.6 L11.4 11.4 M11.4 0.6 L0.6 11.4" stroke="#9fa6b1" stroke-width="1.1"/></svg>
<div class="r" style="left:1010.6px;top:987.61px;width:95.99999999999989px;height:35.0px;border:1px solid #b9bec7;border-radius:4px;background:linear-gradient(90deg,#f0a1cf 58.5px,transparent 58.5px)"></div>
<div class="r" style="left:1069.6px;top:987.61px;width:1.0px;height:35.0px;background:#b9bcc4"></div>
<div class="t" style="left:1021.6px;top:998.06px;font-size:15px;line-height:15px;color:#3a3a40;">A</div>
<svg class="r" style="left:1081.8px;top:999.21px" width="12" height="12" viewBox="0 0 12 12"><path d="M0.6 0.6 L11.4 11.4 M11.4 0.6 L0.6 11.4" stroke="#9fa6b1" stroke-width="1.1"/></svg>
<div class="r" style="left:1117px;top:947.51px;width:96px;height:35.0px;border:1px solid #b9bec7;border-radius:4px;background:linear-gradient(90deg,#7cfa98 58.5px,transparent 58.5px)"></div>
<div class="r" style="left:1176px;top:947.51px;width:1px;height:35.0px;background:#b9bcc4"></div>
<div class="t" style="left:1128px;top:957.96px;font-size:15px;line-height:15px;color:#3a3a40;">P</div>
<svg class="r" style="left:1188.2px;top:959.11px" width="12" height="12" viewBox="0 0 12 12"><path d="M0.6 0.6 L11.4 11.4 M11.4 0.6 L0.6 11.4" stroke="#9fa6b1" stroke-width="1.1"/></svg>
<div class="r" style="left:1117px;top:987.61px;width:96px;height:35.0px;border:1px solid #b9bec7;border-radius:4px;background:linear-gradient(90deg,#7cfa98 58.5px,transparent 58.5px)"></div>
<div class="r" style="left:1176px;top:987.61px;width:1px;height:35.0px;background:#b9bcc4"></div>
<div class="t" style="left:1128px;top:998.06px;font-size:15px;line-height:15px;color:#3a3a40;">P</div>
<svg class="r" style="left:1188.2px;top:999.21px" width="12" height="12" viewBox="0 0 12 12"><path d="M0.6 0.6 L11.4 11.4 M11.4 0.6 L0.6 11.4" stroke="#9fa6b1" stroke-width="1.1"/></svg>
<div class="r" style="left:1224px;top:947.51px;width:96px;height:35.0px;border:1px solid #b9bec7;border-radius:4px;background:linear-gradient(90deg,#7cfa98 58.5px,transparent 58.5px)"></div>
<div class="r" style="left:1283px;top:947.51px;width:1px;height:35.0px;background:#b9bcc4"></div>
<div class="t" style="left:1235px;top:957.96px;font-size:15px;line-height:15px;color:#3a3a40;">P</div>
<svg class="r" style="left:1295.2px;top:959.11px" width="12" height="12" viewBox="0 0 12 12"><path d="M0.6 0.6 L11.4 11.4 M11.4 0.6 L0.6 11.4" stroke="#9fa6b1" stroke-width="1.1"/></svg>
<div class="r" style="left:1224px;top:987.61px;width:96px;height:35.0px;border:1px solid #b9bec7;border-radius:4px;background:linear-gradient(90deg,#7cfa98 58.5px,transparent 58.5px)"></div>
<div class="r" style="left:1283px;top:987.61px;width:1px;height:35.0px;background:#b9bcc4"></div>
<div class="t" style="left:1235px;top:998.06px;font-size:15px;line-height:15px;color:#3a3a40;">P</div>
<svg class="r" style="left:1295.2px;top:999.21px" width="12" height="12" viewBox="0 0 12 12"><path d="M0.6 0.6 L11.4 11.4 M11.4 0.6 L0.6 11.4" stroke="#9fa6b1" stroke-width="1.1"/></svg>
<div class="r" style="left:1330px;top:947.51px;width:96px;height:35.0px;background:#fff;border:1px solid #d3d6dc;border-radius:4px"></div>
<div class="t" style="left:1341px;top:958.11px;font-size:14px;line-height:14px;color:#666;">-</div>
<div class="r" style="left:1330px;top:987.61px;width:96px;height:35.0px;background:#fff;border:1px solid #d3d6dc;border-radius:4px"></div>
<div class="t" style="left:1341px;top:998.21px;font-size:14px;line-height:14px;color:#666;">-</div>
<div class="r" style="left:1437px;top:947.51px;width:96px;height:35.0px;background:#fff;border:1px solid #d3d6dc;border-radius:4px"></div>
<div class="t" style="left:1448px;top:958.11px;font-size:14px;line-height:14px;color:#666;">-</div>
<div class="r" style="left:1437px;top:987.61px;width:96px;height:35.0px;background:#fff;border:1px solid #d3d6dc;border-radius:4px"></div>
<div class="t" style="left:1448px;top:998.21px;font-size:14px;line-height:14px;color:#666;">-</div>
<svg class="r" style="left:1578px;top:953.01px" width="22" height="27" viewBox="0 0 22 27"><circle cx="10.6" cy="3.5" r="3.4" fill="#287873"/><path d="M1.9 4.4 L6.3 8.6 H15 L19.4 4.4" fill="none" stroke="#287873" stroke-width="2.4" stroke-linecap="round" stroke-linejoin="round"/><path d="M6.5 7.6 H14.8 V17.5 H14.4 V24.2 A1.4 1.4 0 0 1 11.6 24.2 V17.5 H9.7 V24.2 A1.4 1.4 0 0 1 6.9 24.2 V17.5 H6.5 Z" fill="#287873"/></svg>
<svg class="r" style="left:1617px;top:954.51px" width="24" height="22" viewBox="0 0 24 22"><path d="M16.5 1.7 H3.2 A1.5 1.5 0 0 0 1.7 3.2 V18 A1.5 1.5 0 0 0 3.2 19.5 H18.3 A1.5 1.5 0 0 0 19.8 18 V10.5" fill="none" stroke="#f2b01e" stroke-width="1.6"/><path d="M6 8.5 L10.6 13.6 L22.6 2.6" fill="none" stroke="#f2b01e" stroke-width="1.6"/></svg>
<svg class="r" style="left:1655px;top:953.01px" width="27" height="26" viewBox="0 0 27 26"><rect x="2" y="1.1" width="23.3" height="23.6" rx="2.3" fill="none" stroke="#b9c0c9" stroke-width="1.8"/><path d="M9.8 9.6 C9.8 7.4 11.4 6.1 13.3 6.1 C15.3 6.1 16.7 7.4 16.7 9.1 C16.7 11.6 13.4 12 13.4 15" fill="none" stroke="#aab1bb" stroke-width="1.7"/><circle cx="13.4" cy="18.8" r="1.1" fill="#aab1bb"/></svg>
<svg class="r" style="left:1698px;top:953.01px" width="21" height="26" viewBox="0 0 21 26"><rect x="1.8" y="3.2" width="17.6" height="21.4" rx="1.6" fill="none" stroke="#c0392b" stroke-width="1.5"/><path d="M5.5 4 L6.6 0.9 H14.2 L15.3 4 Z" fill="#c0392b"/><path d="M7.6 12.6 L12.9 17.4 M12.9 12.6 L7.6 17.4" stroke="#c0392b" stroke-width="1.6"/></svg>
<div class="r" style="left:1796px;top:254px;width:255px;height:286px;border:1px solid #dde1e7"></div>
<div class="r" style="left:1797px;top:301.5px;width:253px;height:2.0px;background:#dde1e7"></div>
<div class="t" style="left:1623.5px;width:600px;text-align:center;top:269.32px;font-size:17.5px;line-height:17.5px;color:#1b1b22;font-weight:700;letter-spacing:-0.58px;">Légende</div>
<div class="r" style="left:1872px;top:303px;width:1px;height:236px;background:#dde1e7"></div>
<div class="r" style="left:1820.0px;top:311.0px;width:29.0px;height:30.0px;background:#7cfa98;border-radius:5px"></div>
<div class="t" style="left:1534.5px;width:600px;text-align:center;top:318.55px;font-size:17px;line-height:17px;color:#2a2a33;">P</div>
<div class="t" style="left:1884px;top:317.70px;font-size:18px;line-height:18px;color:#2b2b33;letter-spacing:-0.38px;">Présent</div>
<div class="r" style="left:1797px;top:349.7px;width:253px;height:1.0px;background:#dde1e7"></div>
<div class="r" style="left:1820.0px;top:358.2px;width:29.0px;height:30.0px;background:#f0a1cf;border-radius:5px"></div>
<div class="t" style="left:1534.5px;width:600px;text-align:center;top:365.75px;font-size:17px;line-height:17px;color:#2a2a33;">A</div>
<div class="t" style="left:1884px;top:364.90px;font-size:18px;line-height:18px;color:#2b2b33;letter-spacing:-0.38px;">Absent</div>
<div class="r" style="left:1797px;top:396.9px;width:253px;height:1.0px;background:#dde1e7"></div>
<div class="r" style="left:1821.0px;top:405.4px;width:27.0px;height:30.0px;background:#a9e3e3;border-radius:5px"></div>
<div class="t" style="left:1534.5px;width:600px;text-align:center;top:412.95px;font-size:17px;line-height:17px;color:#2a2a33;">F</div>
<div class="t" style="left:1884px;top:412.10px;font-size:18px;line-height:18px;color:#2b2b33;letter-spacing:-0.38px;">Fermeture</div>
<div class="r" style="left:1797px;top:444.1px;width:253px;height:1.0px;background:#dde1e7"></div>
<div class="r" style="left:1820.0px;top:452.6px;width:29.0px;height:30.0px;background:#c6a9f2;border-radius:5px"></div>
<div class="t" style="left:1534.5px;width:600px;text-align:center;top:460.15px;font-size:17px;line-height:17px;color:#2a2a33;">V</div>
<div class="t" style="left:1884px;top:459.30px;font-size:18px;line-height:18px;color:#2b2b33;letter-spacing:-0.38px;">Vacances</div>
<div class="r" style="left:1797px;top:491.3px;width:253px;height:1.0px;background:#dde1e7"></div>
<div class="r" style="left:1818.0px;top:499.8px;width:33.0px;height:29.999999999999943px;background:#fde58a;border-radius:5px"></div>
<div class="t" style="left:1534.5px;width:600px;text-align:center;top:507.35px;font-size:17px;line-height:17px;color:#2a2a33;">M</div>
<div class="t" style="left:1884px;top:506.50px;font-size:18px;line-height:18px;color:#2b2b33;letter-spacing:-0.38px;">Maladie</div>
<div class="r" style="left:336.5px;top:1054.4px;width:74.0px;height:33.799999999999955px;border:1px solid #cfd4db;border-radius:4px;background:#fff"></div>
<div class="t" style="left:352.7px;top:1063.53px;font-size:15.5px;line-height:15.5px;color:#3a3f4a;letter-spacing:0.3px;">25</div>
<svg class="r" style="left:392px;top:1067px" width="13" height="9" viewBox="0 0 13 9"><path d="M1.5 1.5 L6.5 6.5 L11.5 1.5" fill="none" stroke="#343a40" stroke-width="2.2"/></svg>
<div class="t" style="left:429.2px;top:1061.40px;font-size:18px;line-height:18px;color:#2b2b33;letter-spacing:-0.36px;">Affichage de 1 - 8 sur 8</div>
<div class="r" style="left:677px;top:299.3px;width:295px;height:130.0px;background:#fff;border:1px solid #dfe2e6;border-radius:5px"></div>
<svg class="r" style="left:697px;top:317px" width="15" height="20" viewBox="0 0 15 20"><circle cx="7.5" cy="2.6" r="2.5" fill="#287873"/><path d="M1.2 5.5 L4.6 8.4 H10.4 L13.8 5.5" fill="none" stroke="#287873" stroke-width="1.7" stroke-linecap="round"/><path d="M4.8 7.8 H10.2 V13.3 H9.9 V19 H8 V13.3 H7 V19 H5.1 V13.3 H4.8 Z" fill="#287873"/></svg>
<div class="t" style="left:726.6px;top:319.20px;font-size:18px;line-height:18px;color:#2b2b33;letter-spacing:-0.21px;">Appliquer l&#39;occupation réelle</div>
<svg class="r" style="left:697px;top:355px" width="17" height="17" viewBox="0 0 17 17"><path d="M12.5 1.5 H2 A1 1 0 0 0 1 2.5 V15 A1 1 0 0 0 2 16 H14 A1 1 0 0 0 15 15 V8.5" fill="none" stroke="#f2b01e" stroke-width="1.5"/><path d="M4 7 L7.5 10.5 L16.3 1.5" fill="none" stroke="#f2b01e" stroke-width="1.5"/></svg>
<div class="t" style="left:726.6px;top:355.20px;font-size:18px;line-height:18px;color:#2b2b33;letter-spacing:-0.25px;">Appliquer l&#39;occupation prévue</div>
<svg class="r" style="left:697px;top:390px" width="15" height="20" viewBox="0 0 15 20"><rect x="1" y="2.8" width="13" height="16.2" rx="1" fill="none" stroke="#c0392b" stroke-width="1.4"/><rect x="4.2" y="0.6" width="6.6" height="3" rx="1" fill="#c0392b"/><path d="M5.3 9 L9.7 13.4 M9.7 9 L5.3 13.4" stroke="#c0392b" stroke-width="1.4"/></svg>
<div class="t" style="left:726.6px;top:391.20px;font-size:18px;line-height:18px;color:#2b2b33;letter-spacing:-0.05px;">Effacer l&#39;occupation</div>
<div class="r" style="left:645px;top:241.5px;width:359.5px;height:204.7px;border:3px solid #f23c3c"></div>
</body></html>
